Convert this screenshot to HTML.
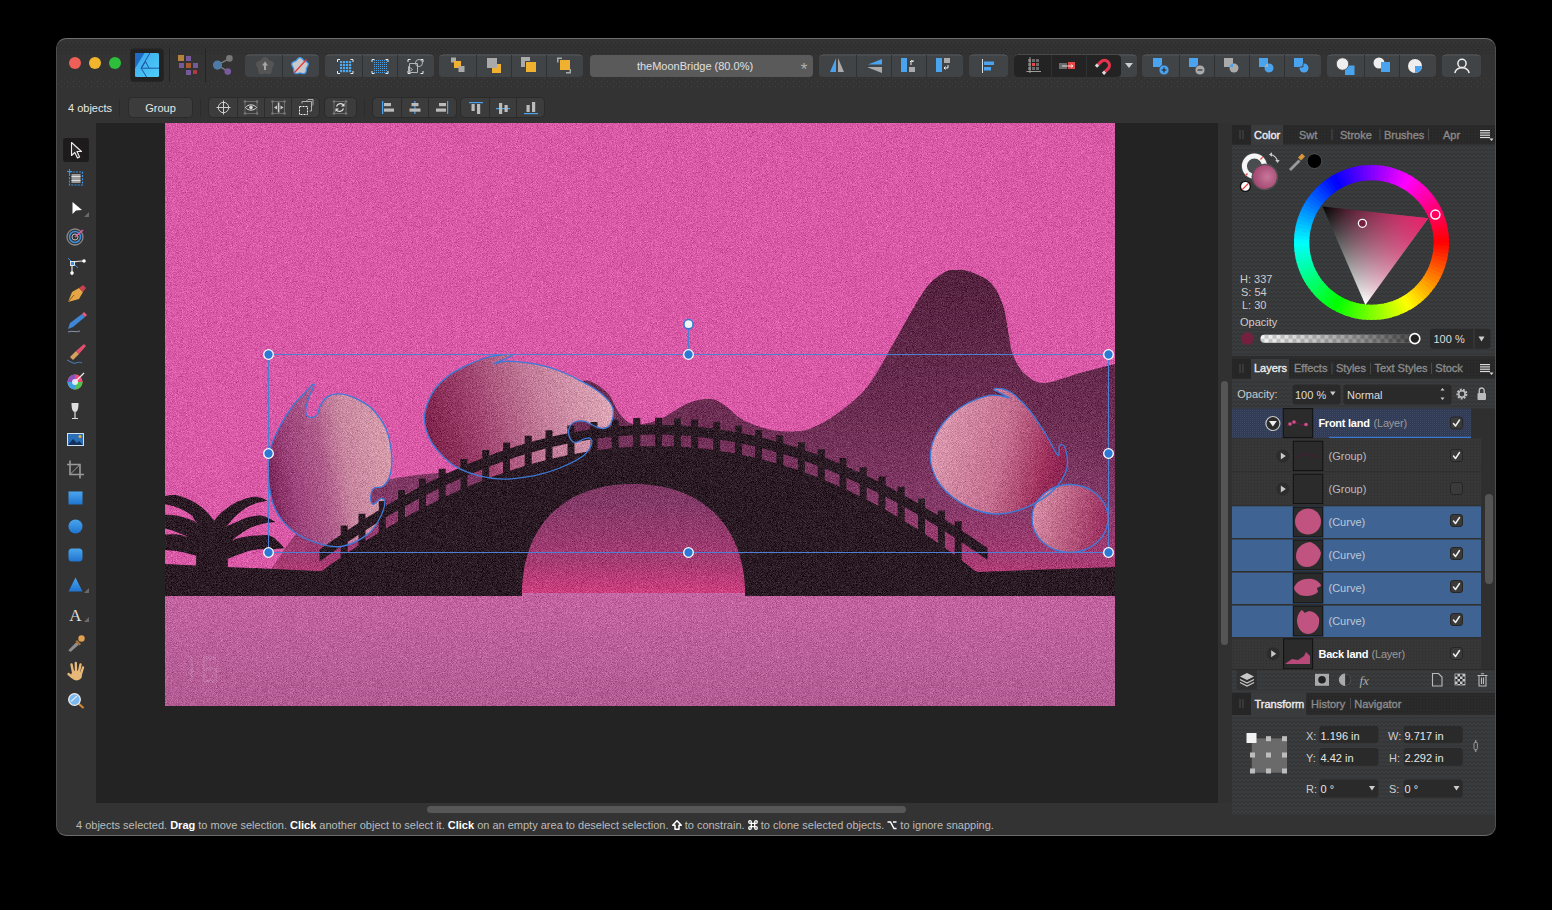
<!DOCTYPE html>
<html><head><meta charset="utf-8">
<style>
*{box-sizing:border-box}
body{margin:0;width:1552px;height:910px;background:#000;overflow:hidden;position:relative;font-family:"Liberation Sans",sans-serif;color:#ddd}
.a{position:absolute}
#win{position:absolute;left:56px;top:38px;width:1440px;height:798px;background:#333;border-radius:10px;overflow:hidden;border:1px solid #4e4e4e;border-top-color:#6e6e6e;border-bottom-color:#6a6a6a}
.tl{position:absolute;width:12px;height:12px;border-radius:50%;top:57px}
.grp{position:absolute;background:#3e4043;border-radius:5px;top:55px;height:22px}
.grp2{position:absolute;background:#3e3e3e;border-radius:4px;top:98px;height:20px;border-bottom:1px solid #2a2a2a}
.sep{position:absolute;width:1px;background:#262626}
.dv{position:absolute;top:0;bottom:0;width:1px;background:#2d2d2d}
.txt{position:absolute;white-space:nowrap;font-size:11px;line-height:13px}
#canvas{position:absolute;left:96px;top:123px;width:1122px;height:680px;background:#232323}
#art{position:absolute;left:165px;top:123px;width:950px;height:583px;overflow:hidden}
#rp{position:absolute;left:1232px;top:123px;width:263px;height:692px;background:#3a3a3a}
.tabbar{position:absolute;left:1232px;width:263px;height:20px;background:#2c2c2c}
.tab{position:absolute;top:0;height:100%;font-size:11px;line-height:20px;color:#8e8e8e;white-space:nowrap}
.tab.on{color:#eee;background:#3a3a3a}
.tsep{position:absolute;top:5px;width:1px;height:11px;background:#555}
.row{position:absolute;left:1232px;width:249px;height:32px;border-bottom:1px solid #2a2a2a}
.sel{background:#3d6393}
.chk{position:absolute;left:1450px;width:13px;height:13px;border-radius:3px;background:#3c3c3c;border:1px solid #2a2a2a}
.thumb{position:absolute;width:29px;height:29px;background:#2a2a2a;border:1px solid #151515}
.box{position:absolute;background:#2a2a2a;border-radius:3px;border-bottom:1px solid #444;font-size:11px;color:#ddd;line-height:18px;padding-left:4px}
</style></head><body>
<div id="win"></div>

<!-- traffic lights -->
<div class="tl" style="left:69px;background:#ed5f57"></div>
<div class="tl" style="left:89px;background:#f0b52d"></div>
<div class="tl" style="left:109px;background:#2dbf3c"></div>

<!-- toolbar row 1 -->
<svg class="a" style="left:0;top:0" width="1552" height="130" viewBox="0 0 1552 130">
<defs>
<linearGradient id="gAD" x1="0" y1="0" x2="1" y2="1"><stop offset="0" stop-color="#3aa6ec"/><stop offset="1" stop-color="#4fd0fb"/></linearGradient>
</defs>
<pattern id="pDotD" width="4" height="4" patternUnits="userSpaceOnUse"><rect x="1" y="1" width="1.2" height="1.2" fill="#262626"/><rect x="3" y="3" width="1.2" height="1.2" fill="#2a2a2a"/></pattern>
<pattern id="pDotL" width="6" height="5" patternUnits="userSpaceOnUse"><rect x="1" y="1" width="1" height="1" fill="#444"/><rect x="4" y="3" width="1" height="1" fill="#3e3e3e"/></pattern>
<rect x="57" y="43" width="1438" height="11" fill="url(#pDotD)"/>
<rect x="57" y="78" width="1438" height="9" fill="url(#pDotL)"/>
<linearGradient id="gEdge" x1="0" y1="0" x2="0" y2="1"><stop offset="0" stop-color="#5e6164"/><stop offset="0.12" stop-color="#404447" stop-opacity="0"/><stop offset="1" stop-color="#404447" stop-opacity="0"/></linearGradient>
<g fill="#404447" stroke="url(#gEdge)" stroke-width="1">
<rect x="245" y="55" width="74" height="22" rx="4"/>
<rect x="325" y="55" width="109" height="22" rx="4"/>
<rect x="439" y="55" width="144" height="22" rx="4"/>
<rect x="819" y="55" width="144" height="22" rx="4"/>
<rect x="969" y="55" width="39" height="22" rx="4"/>
<rect x="1014" y="55" width="123" height="22" rx="4"/>
<rect x="1142" y="55" width="179" height="22" rx="4"/>
<rect x="1327" y="55" width="109" height="22" rx="4"/>
<rect x="1442" y="55" width="39" height="22" rx="4"/>
</g>
<rect x="1014" y="55" width="107" height="22" rx="4" fill="#232323"/>
<rect x="590" y="55" width="223" height="22" rx="4" fill="#5a5a5a"/>
<g fill="#2f3032">
<rect x="282" y="55" width="1" height="22"/>
<rect x="362" y="55" width="1" height="22"/><rect x="397" y="55" width="1" height="22"/>
<rect x="476" y="55" width="1" height="22"/><rect x="511" y="55" width="1" height="22"/><rect x="546" y="55" width="1" height="22"/>
<rect x="856" y="55" width="1" height="22"/><rect x="891" y="55" width="1" height="22"/><rect x="926" y="55" width="1" height="22"/>
<rect x="1051" y="55" width="1" height="22"/><rect x="1086" y="55" width="1" height="22"/>
<rect x="1179" y="55" width="1" height="22"/><rect x="1214" y="55" width="1" height="22"/><rect x="1249" y="55" width="1" height="22"/><rect x="1284" y="55" width="1" height="22"/>
<rect x="1364" y="55" width="1" height="22"/><rect x="1399" y="55" width="1" height="22"/>
</g>
<!-- app icon -->
<rect x="130.3" y="48.5" width="33.4" height="33.3" rx="3.5" fill="#222"/>
<rect x="135" y="53" width="24" height="24" rx="1.5" fill="url(#gAD)"/>
<path d="M135,53H144.5L135,68.5Z" fill="#1f6cc4"/>
<path d="M149.8,53L141.2,68.2L146.5,77M141.2,68.2H159M141.2,68.2L145.5,61.5L149,68.2" fill="none" stroke="#1a4a9a" stroke-width="0.9"/>
<rect x="169" y="48" width="1" height="34" fill="#242424"/>
<rect x="205" y="48" width="1" height="34" fill="#242424"/>
<!-- persona grid -->
<rect x="178" y="55" width="6" height="6" fill="#b5823e"/>
<rect x="186" y="56" width="5" height="5" fill="#76599a"/>
<rect x="179" y="63" width="5" height="5" fill="#76599a"/>
<rect x="186" y="63" width="5" height="5" fill="#a85a2e"/>
<rect x="193" y="63" width="5" height="5" fill="#76599a"/>
<rect x="186" y="70" width="5" height="5" fill="#76599a"/>
<rect x="193" y="70" width="4" height="4" fill="#b03a40"/>
<!-- share -->
<path d="M217.5,65.1L229.4,58.4M217.5,65.1L227.8,71.6" stroke="#888" stroke-width="1.2"/>
<circle cx="217.5" cy="65.1" r="4.6" fill="#4f7aa6"/>
<circle cx="229.4" cy="58.4" r="3.3" fill="#777"/>
<circle cx="227.8" cy="71.6" r="3.3" fill="#7a5a9e"/>
<!-- flowers -->
<path d="M273.4,66.2L273.0,66.8L272.6,67.4L272.3,68.0L272.1,68.5L271.9,69.1L271.9,69.7L271.8,70.4L271.8,71.1L271.6,71.9L271.4,72.6L271.0,73.2L270.5,73.7L269.8,74.1L269.1,74.2L268.3,74.3L267.6,74.2L266.9,74.0L266.2,73.8L265.6,73.7L265.0,73.6L264.4,73.7L263.8,73.8L263.1,74.0L262.4,74.2L261.7,74.3L260.9,74.2L260.2,74.1L259.5,73.7L259.0,73.2L258.6,72.6L258.4,71.9L258.2,71.1L258.2,70.4L258.1,69.7L258.1,69.1L257.9,68.5L257.7,68.0L257.4,67.4L257.0,66.8L256.6,66.2L256.3,65.5L256.1,64.8L256.0,64.0L256.2,63.3L256.5,62.7L257.0,62.1L257.6,61.6L258.2,61.3L258.9,61.0L259.5,60.7L260.1,60.5L260.6,60.2L261.1,59.8L261.5,59.3L261.9,58.8L262.4,58.2L263.0,57.7L263.6,57.3L264.3,57.0L265.0,56.9L265.7,57.0L266.4,57.3L267.0,57.7L267.6,58.2L268.1,58.8L268.5,59.3L268.9,59.8L269.4,60.2L269.9,60.5L270.5,60.7L271.1,61.0L271.8,61.3L272.4,61.6L273.0,62.1L273.5,62.7L273.8,63.3L274.0,64.0L273.9,64.8L273.7,65.5Z" fill="#555"/>
<path d="M265,61.5L262,65.5H264V70H266V65.5H268Z" fill="#a6a6a6"/>
<path d="M307.7,66.2L307.4,66.8L307.0,67.3L306.8,67.8L306.5,68.3L306.4,68.9L306.4,69.4L306.3,70.1L306.3,70.7L306.1,71.4L305.9,72.1L305.5,72.7L305.1,73.2L304.5,73.5L303.8,73.6L303.1,73.7L302.4,73.6L301.7,73.4L301.1,73.2L300.5,73.1L300.0,73.1L299.5,73.1L298.9,73.2L298.3,73.4L297.6,73.6L296.9,73.7L296.2,73.6L295.5,73.5L294.9,73.2L294.5,72.7L294.1,72.1L293.9,71.4L293.7,70.7L293.7,70.1L293.6,69.4L293.6,68.9L293.5,68.3L293.2,67.8L293.0,67.3L292.6,66.8L292.3,66.2L292.0,65.6L291.8,64.9L291.7,64.2L291.8,63.5L292.1,62.9L292.6,62.4L293.1,62.0L293.7,61.7L294.4,61.4L295.0,61.2L295.5,60.9L296.0,60.6L296.4,60.3L296.8,59.8L297.2,59.4L297.6,58.8L298.1,58.4L298.7,58.0L299.3,57.7L300.0,57.6L300.7,57.7L301.3,58.0L301.9,58.4L302.4,58.8L302.8,59.4L303.2,59.8L303.6,60.3L304.0,60.6L304.5,60.9L305.0,61.2L305.6,61.4L306.3,61.7L306.9,62.0L307.4,62.4L307.9,62.9L308.2,63.5L308.3,64.2L308.2,64.9L308.0,65.6Z" fill="#c9c9c9" stroke="#3b8fe4" stroke-width="1.3"/>
<path d="M294.5,72.5L306.5,59.5" stroke="#e8323c" stroke-width="1.2"/>
<!-- grids -->
<g fill="#4aa9f2">
<rect x="340" y="61" width="2.2" height="2.2"/><rect x="343" y="61" width="2.2" height="2.2"/><rect x="346" y="61" width="2.2" height="2.2"/><rect x="349" y="61" width="2.2" height="2.2"/>
<rect x="340" y="64" width="2.2" height="2.2"/><rect x="343" y="64" width="2.2" height="2.2"/><rect x="346" y="64" width="2.2" height="2.2"/><rect x="349" y="64" width="2.2" height="2.2"/>
<rect x="340" y="67" width="2.2" height="2.2"/><rect x="343" y="67" width="2.2" height="2.2"/><rect x="346" y="67" width="2.2" height="2.2"/><rect x="349" y="67" width="2.2" height="2.2"/>
<rect x="340" y="70" width="2.2" height="2.2"/><rect x="343" y="70" width="2.2" height="2.2"/><rect x="346" y="70" width="2.2" height="2.2"/><rect x="349" y="70" width="2.2" height="2.2"/>
</g>
<g fill="#4a9ee6"><rect x="374" y="60" width="1" height="1"/><rect x="374" y="62" width="1" height="1"/><rect x="374" y="64" width="1" height="1"/><rect x="374" y="66" width="1" height="1"/><rect x="374" y="68" width="1" height="1"/><rect x="374" y="70" width="1" height="1"/><rect x="374" y="72" width="1" height="1"/><rect x="376" y="60" width="1" height="1"/><rect x="376" y="62" width="1" height="1"/><rect x="376" y="64" width="1" height="1"/><rect x="376" y="66" width="1" height="1"/><rect x="376" y="68" width="1" height="1"/><rect x="376" y="70" width="1" height="1"/><rect x="376" y="72" width="1" height="1"/><rect x="378" y="60" width="1" height="1"/><rect x="378" y="62" width="1" height="1"/><rect x="378" y="64" width="1" height="1"/><rect x="378" y="66" width="1" height="1"/><rect x="378" y="68" width="1" height="1"/><rect x="378" y="70" width="1" height="1"/><rect x="378" y="72" width="1" height="1"/><rect x="380" y="60" width="1" height="1"/><rect x="380" y="62" width="1" height="1"/><rect x="380" y="64" width="1" height="1"/><rect x="380" y="66" width="1" height="1"/><rect x="380" y="68" width="1" height="1"/><rect x="380" y="70" width="1" height="1"/><rect x="380" y="72" width="1" height="1"/><rect x="382" y="60" width="1" height="1"/><rect x="382" y="62" width="1" height="1"/><rect x="382" y="64" width="1" height="1"/><rect x="382" y="66" width="1" height="1"/><rect x="382" y="68" width="1" height="1"/><rect x="382" y="70" width="1" height="1"/><rect x="382" y="72" width="1" height="1"/><rect x="384" y="60" width="1" height="1"/><rect x="384" y="62" width="1" height="1"/><rect x="384" y="64" width="1" height="1"/><rect x="384" y="66" width="1" height="1"/><rect x="384" y="68" width="1" height="1"/><rect x="384" y="70" width="1" height="1"/><rect x="384" y="72" width="1" height="1"/><rect x="386" y="60" width="1" height="1"/><rect x="386" y="62" width="1" height="1"/><rect x="386" y="64" width="1" height="1"/><rect x="386" y="66" width="1" height="1"/><rect x="386" y="68" width="1" height="1"/><rect x="386" y="70" width="1" height="1"/><rect x="386" y="72" width="1" height="1"/></g>
<g fill="none" stroke="#eee" stroke-width="1">
<path d="M337.5,62V59.5H340M350.5,59.5H353V62M353,71V73.5H350.5M340,73.5H337.5V71"/>
<path d="M372,62V59.5H374.5M385.5,59.5H388V62M388,71V73.5H385.5M374.5,73.5H372V71"/>
<path d="M408,62V59.5H410.5M420.5,59.5H423V62M423,71V73.5H420.5M410.5,73.5H408V71"/>
</g>
<g fill="none" stroke="#b5b5b5" stroke-width="1">
<path d="M409.5,63.5h8v9h-8z"/><circle cx="419" cy="63" r="3.5"/><path d="M408.5,66.5v6l4,-3z"/>
</g>
<!-- arrange -->
<rect x="451" y="57.5" width="5" height="5" fill="#aaa"/><rect x="454" y="61" width="7" height="7" fill="#f0b030"/><rect x="458.5" y="66" width="6" height="6" fill="#aaa"/>
<rect x="487" y="58" width="10" height="10" fill="#aaa"/><path d="M497,64h4v9h-9v-5h5z" fill="#f0b030"/>
<path d="M521,57h9v4h-5v6h-4z" fill="#aaa"/><rect x="526" y="62" width="10" height="10" fill="#f0b030"/>
<path d="M557,57.5h5v1.5h-3.5v3.5H557z" fill="#aaa"/><rect x="560" y="60" width="10" height="10" fill="#f0b030"/><path d="M571,69v4.5h-5V72h3.5V69z" fill="#aaa"/>
<!-- title -->
<text x="695" y="70" font-size="11" fill="#e0e0e0" text-anchor="middle">theMoonBridge (80.0%)</text>
<text x="804" y="75" font-size="17" fill="#b0b0b0" text-anchor="middle">*</text>
<!-- flip/rotate -->
<path d="M836,58L830,72H836Z" fill="#4aa3ee"/><path d="M838,58L844,72H838Z" fill="#aaa"/>
<path d="M882,59L868,64.5H882Z" fill="#4aa3ee"/><path d="M882,67L868,67V67.5L882,73Z" fill="#aaa"/>
<rect x="901" y="58" width="6" height="14" fill="#4aa3ee"/><rect x="909" y="67" width="6" height="5" fill="#aaa"/><path d="M911,65v-4h3M910,62l1.5,-1.5l1.5,1.5" fill="none" stroke="#eee" stroke-width="1"/>
<rect x="936" y="58" width="6" height="14" fill="#4aa3ee"/><rect x="944" y="58" width="6" height="5" fill="#aaa"/><path d="M948,65v3h-4M945.5,66.5l-1.5,1.5l1.5,1.5" fill="none" stroke="#eee" stroke-width="1"/>
<!-- align -->
<rect x="982" y="59" width="1" height="14" fill="#ddd"/><rect x="984" y="61.5" width="10" height="3.5" fill="#4aa3ee"/><rect x="984" y="67" width="7" height="3.5" fill="#4aa3ee"/>
<!-- snapping -->
<g fill="#6b6b6b"><rect x="1028" y="59" width="3" height="3"/><rect x="1032" y="59" width="3" height="3"/><rect x="1036" y="59" width="3" height="3"/><rect x="1028" y="63" width="3" height="3"/><rect x="1036" y="63" width="3" height="3"/><rect x="1028" y="67" width="3" height="3"/><rect x="1032" y="67" width="3" height="3"/><rect x="1036" y="67" width="3" height="3"/></g>
<rect x="1032" y="63" width="3" height="3" fill="#e54848"/>
<path d="M1026.5,71.5H1041M1030,57V73" stroke="#bbb" stroke-width="0.8"/>
<rect x="1059" y="63" width="8" height="6" fill="#6b6b6b"/><rect x="1068" y="62" width="7" height="7" fill="#e54848"/><path d="M1062,66H1073M1071,64.5l2,1.5l-2,1.5" stroke="#eee" stroke-width="0.9" fill="none"/>
<g transform="translate(1103.7,66) rotate(45)"><path d="M-5,3V-1A5,5 0 0 1 5,-1V3" fill="none" stroke="#e5344e" stroke-width="3.2"/><path d="M-5,3v3M5,3v3" stroke="#ddd" stroke-width="3.2"/></g>

<path d="M1125,63h8l-4,5z" fill="#ccc"/>
<!-- boolean -->
<rect x="1153" y="58" width="9" height="9" fill="#4aa3ee"/><circle cx="1164" cy="70" r="5" fill="#4aa3ee" stroke="#404447" stroke-width="0.8"/><path d="M1161.6,70h4.8M1164,67.6v4.8" stroke="#222" stroke-width="1.1"/>
<rect x="1189" y="58" width="9" height="9" fill="#4aa3ee"/><circle cx="1200" cy="70" r="5" fill="#aaa" stroke="#404447" stroke-width="0.8"/><path d="M1197.6,70h4.8" stroke="#222" stroke-width="1.1"/>
<rect x="1224" y="58" width="9" height="9" fill="#aaa"/><circle cx="1234" cy="68" r="4.5" fill="#aaa"/><path d="M1229.5,68A4.5,4.5 0 0 1 1233,63.6V67h-3.5z" fill="#4aa3ee"/>
<rect x="1259" y="58" width="9" height="9" fill="#4aa3ee"/><circle cx="1269" cy="68" r="4.5" fill="#4aa3ee"/><path d="M1264.5,68A4.5,4.5 0 0 1 1268,63.6V67h-3.5z" fill="#aaa"/>
<rect x="1294" y="58" width="9" height="9" fill="#4aa3ee"/><circle cx="1304" cy="68" r="4.5" fill="#4aa3ee"/><path d="M1299.5,67H1303V63.5" stroke="#333" stroke-width="0.8" fill="none"/>
<!-- insert -->
<rect x="1345" y="65.5" width="9.5" height="9.5" fill="#4aa3ee"/><circle cx="1342.5" cy="64" r="6.2" fill="#eee" stroke="#404447" stroke-width="0.8"/>
<circle cx="1379" cy="63" r="5.5" fill="#eee"/><rect x="1381" y="62" width="9" height="10" fill="#4aa3ee"/>
<circle cx="1415" cy="66" r="7" fill="#eee"/><path d="M1415,66h7A7,7 0 0 1 1415,73z" fill="#4aa3ee"/>
<!-- person -->
<circle cx="1462" cy="63.4" r="4.1" fill="none" stroke="#eee" stroke-width="1.5"/><path d="M1454.8,73C1455.8,69.3 1458.5,67.8 1462,67.8C1465.5,67.8 1468.2,69.3 1469.2,73" fill="none" stroke="#eee" stroke-width="1.5"/>
</svg>

<!-- toolbar row 2 + tools -->
<svg class="a" style="left:0;top:0" width="100" height="910" viewBox="0 0 100 910">
<defs>
<linearGradient id="gBlue" x1="0" y1="0" x2="0" y2="1"><stop offset="0" stop-color="#4aa6ee"/><stop offset="1" stop-color="#1f74d0"/></linearGradient>
<radialGradient id="gWheel" cx="0.5" cy="0.5" r="0.5"><stop offset="0" stop-color="#fff"/><stop offset="1" stop-color="#fff" stop-opacity="0"/></radialGradient>
</defs>
<!-- selected move -->
<rect x="63" y="138" width="26" height="24" rx="3" fill="#1e1b1d"/>
<path d="M71.5,142.5V155.5L74.8,152.5L77.5,158L79.6,157L77,151.5H81.5Z" fill="#2a2a2a" stroke="#eee" stroke-width="1.1" stroke-linejoin="round"/>
<!-- artboard -->
<rect x="69.5" y="172" width="13" height="13" fill="none" stroke="#3d95e6" stroke-width="1.2" stroke-dasharray="2 1.2"/>
<rect x="71.5" y="174" width="9" height="9" fill="#9a9a9a"/><path d="M71.5,176.5h9M71.5,180.5h9" stroke="#ddd" stroke-width="1"/>
<path d="M69.5,169v5M67,171.5h5" stroke="#3d95e6" stroke-width="1"/>
<!-- node -->
<path d="M72.5,202V214L76,210.5L82,210Z" fill="#fff"/>
<path d="M89,212V217H84Z" fill="#6a6a6a"/>
<!-- contour -->
<circle cx="75" cy="237" r="8" fill="none" stroke="#8a8a8a" stroke-width="1.3"/><circle cx="75" cy="237" r="5.5" fill="none" stroke="#3d8ee0" stroke-width="1.5"/><circle cx="75" cy="237" r="3" fill="none" stroke="#bbb" stroke-width="1"/>
<path d="M75,237L83,230" stroke="#e85aa0" stroke-width="1.6"/>
<!-- corner -->
<path d="M72,275V265C72,262 75,261 84,261" fill="none" stroke="#ddd" stroke-width="1.2"/>
<path d="M68,258L78,268" stroke="#3d8ee0" stroke-width="1"/>
<rect x="70.5" y="261.5" width="4" height="4" fill="#3d8ee0" stroke="#fff" stroke-width="0.8"/>
<circle cx="84" cy="261" r="1.8" fill="#fff"/><circle cx="72" cy="273" r="1.8" fill="#fff"/>
<!-- pen -->
<path d="M68,302L72,292L79,288L83,292L79,299Z" fill="#e5a445"/><path d="M79,288L83,285L86,288L83,292Z" fill="#c8424e"/><path d="M68,302L74,295" stroke="#6a4a20" stroke-width="0.8"/>
<!-- pencil -->
<path d="M68,329L70,323L82,314L85,317L73,327Z" fill="#3f86d6"/><path d="M82,314L84,312L87,315L85,317Z" fill="#e85a7a"/><path d="M68,332C72,330 76,333 80,331" fill="none" stroke="#9ac" stroke-width="0.8"/>
<!-- brush -->
<path d="M70,357L76,351L79,354L73,360Z" fill="#d8a060"/><path d="M76,351L84,344L86,346L79,354Z" fill="#e0506e"/><path d="M67,360L73,363C76,364 78,361 82,363" fill="none" stroke="#4a8ad0" stroke-width="0.9"/>
<!-- fill wheel -->
<circle cx="75" cy="382" r="7.5" fill="#e0a030"/>
<path d="M75,382L75,374.5A7.5,7.5 0 0 1 82.5,382Z" fill="#f04a80"/><path d="M75,382L82.5,382A7.5,7.5 0 0 1 75,389.5Z" fill="#50c050"/><path d="M75,382L75,389.5A7.5,7.5 0 0 1 67.5,382Z" fill="#40a0e0"/><path d="M75,382L67.5,382A7.5,7.5 0 0 1 75,374.5Z" fill="#8a50c0"/>
<circle cx="75" cy="382" r="3" fill="#fff" opacity="0.8"/><path d="M75,382L84,373" stroke="#eee" stroke-width="1.3"/>
<!-- transparency glass -->
<path d="M71.5,403H78.5C78.5,409 77.5,412 75,412C72.5,412 71.5,409 71.5,403Z" fill="#ddd"/><path d="M75,412V418M72,418.5H78" stroke="#ddd" stroke-width="1.2"/>
<!-- place image -->
<rect x="67" y="433" width="17" height="13" fill="#cfe0f0"/><rect x="68" y="434" width="15" height="11" fill="#2a6fb8"/><path d="M68,445L73,439L77,443L79,441L83,445Z" fill="#15305a"/><circle cx="80" cy="436.5" r="1.5" fill="#f0b030"/>
<!-- crop -->
<path d="M70,460.5V474.5H84M67,464.5H80V478.5" fill="none" stroke="#9a9a9a" stroke-width="1.6"/><path d="M70,474.5L80,464.5" stroke="#9a9a9a" stroke-width="1"/>
<!-- shapes -->
<rect x="68.5" y="491.5" width="14" height="13" fill="url(#gBlue)"/>
<circle cx="75.5" cy="526.5" r="7" fill="url(#gBlue)"/>
<rect x="68.5" y="548.5" width="14" height="13" rx="3.5" fill="url(#gBlue)"/>
<path d="M75.5,577.5L82.5,591.5H68.5Z" fill="url(#gBlue)"/>
<path d="M89,588V593H84Z" fill="#6a6a6a"/>
<text x="75.5" y="621" font-family="Liberation Serif" font-size="17" fill="#ddd" text-anchor="middle">A</text>
<path d="M89,617V622H84Z" fill="#6a6a6a"/>
<!-- picker -->
<path d="M68.3,650.3L76.5,642L79,644.5L70.5,652Z" fill="#8e8e8e"/><path d="M75.5,641.5L79.5,645.5L81,644L77,640Z" fill="#b07030"/><circle cx="81.5" cy="638.5" r="3.2" fill="#e0a050"/>
<!-- hand -->
<g stroke="#e8b878" stroke-width="2.4" stroke-linecap="round" fill="none"><path d="M73,672L71.5,664.5M76,671L75.8,663M79,671.5L80.5,664.5M81,674L83,667.5M72,677L68.5,674"/></g>
<ellipse cx="76.5" cy="675.5" rx="5.5" ry="5" fill="#e8b878"/>
<!-- zoom -->
<path d="M78.5,703.5L83.5,708" stroke="#d08838" stroke-width="2.2"/><circle cx="74.5" cy="699.5" r="5.8" fill="#7ab8ee" stroke="#eee" stroke-width="1.3"/><path d="M71,701.5L77,696" stroke="#cfe6fa" stroke-width="1.5"/>
</svg>
<svg class="a" style="left:100px;top:90px" width="460" height="34" viewBox="100 90 460 34">
<g fill="#3c3c3c" stroke="#2a2a2a" stroke-width="1">
<rect x="128.5" y="97.5" width="64" height="20" rx="4"/>
<rect x="208.5" y="97.5" width="111" height="20" rx="4"/>
<rect x="324.5" y="97.5" width="32" height="20" rx="4"/>
<rect x="372.5" y="97.5" width="84" height="20" rx="4"/>
<rect x="460.5" y="97.5" width="84" height="20" rx="4"/>
</g>
<g fill="#2c2c2c">
<rect x="119" y="99" width="1" height="18"/><rect x="200" y="99" width="1" height="18"/><rect x="364" y="99" width="1" height="18"/>
<rect x="237" y="98" width="1" height="19"/><rect x="264" y="98" width="1" height="19"/><rect x="291" y="98" width="1" height="19"/>
<rect x="401" y="98" width="1" height="19"/><rect x="428" y="98" width="1" height="19"/>
<rect x="489" y="98" width="1" height="19"/><rect x="516" y="98" width="1" height="19"/>
</g>
<text x="160.5" y="112" font-size="11" fill="#e6e6e6" text-anchor="middle">Group</text>
<g fill="none" stroke="#cfcfcf" stroke-width="1">
<circle cx="223.5" cy="107.5" r="5.2"/><path d="M223.5,100.5v14M216.5,107.5h14"/>
</g>
<g fill="none" stroke="#777" stroke-width="0.8"><rect x="245" y="101.5" width="12" height="12"/><rect x="272.5" y="101.5" width="12" height="12"/><rect x="334" y="101.5" width="12" height="12"/></g>
<g fill="#777"><circle cx="245" cy="101.5" r="1.3"/><circle cx="257" cy="101.5" r="1.3"/><circle cx="245" cy="113.5" r="1.3"/><circle cx="257" cy="113.5" r="1.3"/>
<circle cx="272.5" cy="101.5" r="1.3"/><circle cx="284.5" cy="101.5" r="1.3"/><circle cx="272.5" cy="113.5" r="1.3"/><circle cx="284.5" cy="113.5" r="1.3"/>
<circle cx="334" cy="101.5" r="1.3"/><circle cx="346" cy="101.5" r="1.3"/><circle cx="334" cy="113.5" r="1.3"/><circle cx="346" cy="113.5" r="1.3"/></g>
<path d="M245.5,107.5C248,104 254,104 256.5,107.5C254,111 248,111 245.5,107.5Z" fill="none" stroke="#ddd" stroke-width="1"/><circle cx="251" cy="107.5" r="1.8" fill="#ddd"/>
<rect x="277.8" y="102.5" width="1.6" height="10" fill="#ccc"/><path d="M274,107.5l3,-2v4zM283.5,107.5l-3,-2v4z" fill="#ccc"/>
<path d="M299.5,106.5h8v8h-8z" fill="none" stroke="#eee" stroke-width="1" stroke-dasharray="2 1"/><path d="M302,103.5V101.5h9.5v9.5h-2M306,101.5l2,-2h5v5l-2,2" fill="none" stroke="#bbb" stroke-width="0.9"/>
<path d="M336.5,106.5A4.2,4.2 0 0 1 344,105.5M343.5,108.5A4.2,4.2 0 0 1 336,109.5" fill="none" stroke="#ddd" stroke-width="1.2"/><path d="M344.5,103v3.5h-3.5zM335.5,112v-3.5h3.5z" fill="#ddd"/>
<!-- align icons -->
<rect x="382" y="101" width="1.2" height="13" fill="#4aa3ee"/><rect x="384" y="103" width="7" height="3.2" fill="#bbb"/><rect x="384" y="108.5" width="10" height="3.2" fill="#bbb"/>
<rect x="414.3" y="101" width="1.2" height="13" fill="#4aa3ee"/><rect x="411.5" y="103" width="7" height="3.2" fill="#bbb"/><rect x="409.5" y="108.5" width="11" height="3.2" fill="#bbb"/>
<rect x="447" y="101" width="1.2" height="13" fill="#4aa3ee"/><rect x="439" y="103" width="7" height="3.2" fill="#bbb"/><rect x="436" y="108.5" width="10" height="3.2" fill="#bbb"/>
<rect x="469" y="102" width="14" height="1.2" fill="#4aa3ee"/><rect x="471.5" y="104" width="3.2" height="7" fill="#bbb"/><rect x="477" y="104" width="3.2" height="10" fill="#bbb"/>
<rect x="496" y="108" width="14" height="1.2" fill="#4aa3ee"/><rect x="499" y="103" width="3.2" height="11" fill="#bbb"/><rect x="504.5" y="105" width="3.2" height="7" fill="#bbb"/>
<rect x="524" y="113" width="14" height="1.2" fill="#4aa3ee"/><rect x="526.5" y="105" width="3.2" height="7" fill="#bbb"/><rect x="532" y="102" width="3.2" height="10" fill="#bbb"/>
</svg>
<div class="txt" style="left:68px;top:102px;color:#e6e6e6">4 objects</div>

<!-- canvas -->
<div id="canvas"></div>
<div class="a" style="left:1218px;top:123px;width:14px;height:680px;background:#313131"></div>
<div class="a" style="left:1221px;top:381px;width:7px;height:264px;border-radius:4px;background:#555"></div>
<div class="a" style="left:427px;top:806px;width:479px;height:7px;border-radius:4px;background:#575757"></div>

<svg class="a" style="left:165px;top:123px" width="950" height="583" viewBox="165 123 950 583">
<defs>
<linearGradient id="gBack" x1="0" y1="270" x2="0" y2="596" gradientUnits="userSpaceOnUse">
<stop offset="0" stop-color="#52213d"/><stop offset="0.45" stop-color="#6c2e53"/><stop offset="0.72" stop-color="#843a68"/><stop offset="0.9" stop-color="#a83b73"/><stop offset="1" stop-color="#d03f80"/></linearGradient>
<linearGradient id="gL1" x1="268" y1="470" x2="390" y2="450" gradientUnits="userSpaceOnUse"><stop offset="0" stop-color="#7e285c"/><stop offset="0.18" stop-color="#9c427a"/><stop offset="0.45" stop-color="#b05e8c"/><stop offset="0.62" stop-color="#c7849e"/><stop offset="1" stop-color="#d69cab"/></linearGradient>
<linearGradient id="gL2" x1="428" y1="440" x2="605" y2="395" gradientUnits="userSpaceOnUse"><stop offset="0" stop-color="#7e224a"/><stop offset="0.3" stop-color="#a04470"/><stop offset="0.62" stop-color="#c27a98"/><stop offset="1" stop-color="#dca4b4"/></linearGradient>
<linearGradient id="gL3" x1="940" y1="440" x2="1065" y2="470" gradientUnits="userSpaceOnUse"><stop offset="0" stop-color="#d894aa"/><stop offset="0.5" stop-color="#c46e8f"/><stop offset="0.85" stop-color="#9c2e5a"/><stop offset="1" stop-color="#8a2250"/></linearGradient>
<linearGradient id="gL4" x1="1035" y1="510" x2="1105" y2="525" gradientUnits="userSpaceOnUse"><stop offset="0" stop-color="#d68ca3"/><stop offset="1" stop-color="#9a2e5e"/></linearGradient>
<linearGradient id="gWater" x1="0" y1="596" x2="0" y2="706" gradientUnits="userSpaceOnUse"><stop offset="0" stop-color="#c263a0"/><stop offset="1" stop-color="#b25b93"/></linearGradient>
<filter id="grain" x="165" y="123" width="950" height="583" filterUnits="userSpaceOnUse" color-interpolation-filters="sRGB">
<feTurbulence type="fractalNoise" baseFrequency="1.2" numOctaves="2" seed="7" result="t"/>
<feColorMatrix in="t" type="matrix" values="0.6 0.3 0.1 0 0  0.6 0.3 0.1 0 0  0.6 0.3 0.1 0 0  0 0 0 0 1" result="g"/>
<feComposite in="SourceGraphic" in2="g" operator="arithmetic" k1="0" k2="1" k3="0.6" k4="-0.3"/>
</filter>
</defs>
<g filter="url(#grain)">
<rect x="165" y="123" width="950" height="583" fill="#da59a7"/>
<path fill="url(#gBack)" d="M272,568C276.7,561.7 288.7,541.3 300,530C311.3,518.7 326.2,508.2 340,500C353.8,491.8 366.8,485.5 383,481C399.2,476.5 420.8,474.7 437,473C453.2,471.3 464.5,476.5 480,471C495.5,465.5 516.7,451.8 530,440C543.3,428.2 551.1,409.9 560,400C568.9,390.1 575.8,381.9 583.6,380.7C591.4,379.4 601,386.9 607,392.5C613,398.1 615.5,408.8 619.7,414C623.9,419.2 627.6,422.5 632.3,424C637,425.5 642.9,424.1 648,423C653.1,421.9 656.3,421 663,417.7C669.7,414.4 680.4,406.4 688.2,403.3C696,400.2 703.9,398.5 709.9,398.8C715.9,399.1 718.9,401.7 724.3,405.1C729.7,408.6 734.9,415.4 742.4,419.5C749.9,423.6 760.4,427.5 769.4,429.5C778.4,431.5 789,431.8 796.5,431.3C804,430.9 807.2,430.1 814.5,426.8C821.8,423.5 831,418.6 840,411.6C849,404.6 859.1,397.4 868.6,385C878.1,372.6 887.5,353.1 897,337C906.5,320.9 917.7,299.4 925.7,288.6C933.7,277.8 940.1,275.1 945,272C949.9,268.9 951.2,270.2 955,270C958.8,269.8 962.2,269 968,271C973.8,273 984.2,276.5 990,282C995.8,287.5 999.6,296 1002.6,304C1005.6,312 1006.3,321.5 1008,330C1009.7,338.5 1010.2,347.7 1013,355C1015.8,362.3 1019.8,369.3 1025,374C1030.2,378.7 1034.8,383.2 1044,383C1053.2,382.8 1068.2,376.2 1080,373C1091.8,369.8 1107.5,365.8 1115,364C1122.5,362.2 1123.3,362.3 1125,362L1125,600L272,600Z"/>
<path fill="url(#gL1)" d="M314.3,384C315,385 309.6,394.7 308.2,399.3C306.7,404 305.5,408.7 305.7,411.7C305.9,414.7 307.5,416.5 309.4,417.2C311.3,417.8 315.1,417.2 316.8,415.4C318.6,413.7 318.1,409.8 319.8,406.8C321.4,403.8 323.5,399.5 326.7,397.4C329.9,395.2 334.3,393.8 339.1,393.9C343.8,394 349.6,395.6 355.1,398.1C360.7,400.7 367.3,404.1 372.5,409.2C377.6,414.4 382.9,421.6 386.1,429C389.2,436.4 390.8,446.3 391.5,453.7C392.2,461.2 391.8,468.2 390.5,473.5C389.2,478.9 386.4,483.4 383.6,485.9C380.8,488.4 375.8,486.3 373.7,488.4C371.6,490.4 370.8,495.6 370.7,498.3C370.6,500.9 371.5,504.4 373.2,504.4C374.9,504.4 379.2,498.5 381.1,498.3C383,498.1 385.2,499.5 384.8,503.2C384.4,506.9 381.7,515.2 378.6,520.5C375.5,525.9 372.5,531 366.3,535.4C360.1,539.7 349.8,545.2 341.5,546.5C333.3,547.7 325.1,545.4 316.8,542.8C308.6,540.1 299.1,536.2 292.1,530.4C285.1,524.6 278.7,516.8 274.8,508.2C270.9,499.5 269.4,488 268.6,478.5C267.8,469 268.2,459.5 269.8,451.3C271.5,443 274.8,436.4 278.5,429C282.2,421.6 287.8,412.7 292.1,406.8C296.4,400.8 300.7,397 304.5,393.2C308.2,389.4 313.7,383 314.3,384Z"/>
<path fill="url(#gL2)" d="M424.6,415.1C425.4,408.2 428.8,399.2 432.5,392.8C436.2,386.4 441.8,381.1 446.9,376.9C451.9,372.6 457,370.3 462.8,367.3C468.6,364.3 475.8,361.1 481.9,359C488,357 494.4,355.6 499.4,355C504.5,354.4 513,354 512.2,355.4C511.4,356.7 496,362.3 494.7,363.3C493.3,364.3 500.5,361.7 504.2,361.4C507.9,361.1 511.1,361.1 517,361.7C522.8,362.3 532.4,363.5 539.3,364.9C546.2,366.4 551.8,368 558.4,370.5C565,373 572.5,376.6 579.1,380.1C585.8,383.5 592.9,387.2 598.2,391.2C603.5,395.2 608.5,400.2 611,404C613.5,407.7 613.5,410.1 613.4,413.5C613.2,417 611.9,422.1 610.2,424.7C608.5,427.2 605.8,428.5 603,428.7C600.2,428.8 596.6,426.7 593.5,425.5C590.3,424.2 587.1,421.7 583.9,421.2C580.7,420.6 576.9,420.9 574.3,422.3C571.8,423.7 569.4,426.7 568.8,429.4C568.1,432.2 569.2,436.8 570.4,439C571.5,441.2 573.7,442.5 575.9,442.5C578.2,442.5 581.5,439.7 583.9,439C586.3,438.3 589.1,437.1 590.3,438.2C591.5,439.3 592.4,442.3 591.1,445.4C589.7,448.4 587.7,452.7 582.3,456.5C576.9,460.4 566.4,465.3 558.4,468.5C550.4,471.7 543.5,473.9 534.5,475.7C525.5,477.4 513.5,479.2 504.2,479.2C494.9,479.2 487,477.8 478.7,475.7C470.5,473.5 461.7,470.3 454.8,466.1C447.9,461.8 441.8,455.5 437.3,450.2C432.8,444.9 429.9,440.1 427.7,434.2C425.6,428.4 423.8,422 424.6,415.1Z"/>
<path fill="url(#gL3)" d="M993.7,389.5C993.8,389.1 995.3,388.3 997.2,388.4C999.2,388.4 1002.4,388.7 1005.2,389.7C1008,390.7 1009.8,391 1013.9,394.5C1018.1,398 1024.8,404.3 1030,410.8C1035.2,417.3 1040.6,426 1045.3,433.5C1049.9,440.9 1055.4,453.3 1057.8,455.4C1060.2,457.5 1058.4,447.5 1059.5,446C1060.5,444.4 1062.8,443.9 1064.1,446C1065.3,448.1 1066.8,454.3 1067.2,458.5C1067.5,462.7 1068.1,466.2 1066.1,471C1064.2,475.9 1060.6,482.5 1055.7,487.7C1050.8,493 1043.9,498.3 1036.9,502.3C1030,506.4 1021.3,509.8 1013.9,511.7C1006.6,513.7 1000,514.4 993.1,513.8C986.1,513.3 979.2,511.6 972.2,508.6C965.2,505.7 957.2,501 951.3,496.1C945.4,491.2 940.2,485.6 936.7,479.4C933.2,473.1 930.8,465.5 930.4,458.5C930.1,451.5 931.8,444.2 934.6,437.6C937.4,431 941.9,424.4 947.1,418.8C952.4,413.3 958.8,408.1 965.9,404.2C973,400.3 983.4,396.7 989.7,395.4C996,394.1 1000.4,396.1 1003.7,396.5C1007,396.9 1009.6,398.3 1009.6,398C1009.5,397.6 1005.6,395.7 1003.4,394.5C1001.2,393.3 998,391.8 996.4,391C994.8,390.2 993.6,389.9 993.7,389.5Z"/>
<ellipse cx="1070" cy="518.5" rx="38" ry="34" fill="url(#gL4)"/>
<g fill="#2a1a23">
<path d="M165,564L196,565.6L228,567L275,569L318.5,571L978,572L1115,567L1115,596L165,596Z"/>
<path d="M318.5,597L318.5,571.4L319.2,572.8L322.2,570.7L325.2,568.5L328.2,566.3L331.2,564.2L334.2,562.1L337.2,560L340.2,557.9L343.2,555.9L346.2,553.8L349.1,551.8L352.1,549.8L355.1,547.8L358.1,545.8L361.1,543.9L364.1,542L367.1,540L370.1,538.1L373.1,536.3L376.1,534.4L379.1,532.6L382.1,530.8L385.1,528.9L388.1,527.2L391.1,525.4L394.1,523.7L397.1,521.9L400.1,520.2L403,518.5L406,516.9L409,515.2L412,513.6L415,511.9L418,510.4L421,508.8L424,507.2L427,505.7L430,504.2L433,502.7L436,501.2L439,499.7L442,498.3L445,496.8L448,495.4L451,494L454,492.7L456.9,491.3L459.9,490L462.9,488.7L465.9,487.4L468.9,486.1L471.9,484.9L474.9,483.6L477.9,482.4L480.9,481.2L483.9,480L486.9,478.9L489.9,477.8L492.9,476.6L495.9,475.5L498.9,474.5L501.9,473.4L504.9,472.4L507.9,471.3L510.8,470.3L513.8,469.4L516.8,468.4L519.8,467.5L522.8,466.6L525.8,465.7L528.8,464.8L531.8,463.9L534.8,463.1L537.8,462.2L540.8,461.4L543.8,460.7L546.8,459.9L549.8,459.2L552.8,458.4L555.8,457.7L558.8,457.1L561.8,456.4L564.8,455.8L567.7,455.1L570.7,454.5L573.7,454L576.7,453.4L579.7,452.9L582.7,452.4L585.7,451.9L588.7,451.4L591.7,450.9L594.7,450.5L597.7,450.1L600.7,449.7L603.7,449.3L606.7,448.9L609.7,448.6L612.7,448.3L615.7,448L618.7,447.7L621.6,447.5L624.6,447.3L627.6,447L630.6,446.9L633.6,446.7L636.6,446.5L639.6,446.4L642.6,446.3L645.6,446.2L648.6,446.2L651.6,446.1L654.6,446.1L657.6,446.1L660.6,446.1L663.6,446.2L666.6,446.2L669.6,446.3L672.6,446.4L675.5,446.5L678.5,446.7L681.5,446.8L684.5,447L687.5,447.2L690.5,447.5L693.5,447.7L696.5,448L699.5,448.3L702.5,448.6L705.5,449L708.5,449.3L711.5,449.7L714.5,450.1L717.5,450.5L720.5,451L723.5,451.4L726.5,451.9L729.4,452.5L732.4,453L735.4,453.5L738.4,454.1L741.4,454.7L744.4,455.3L747.4,456L750.4,456.6L753.4,457.3L756.4,458L759.4,458.8L762.4,459.5L765.4,460.3L768.4,461.1L771.4,461.9L774.4,462.8L777.4,463.6L780.4,464.5L783.4,465.4L786.3,466.3L789.3,467.3L792.3,468.3L795.3,469.3L798.3,470.3L801.3,471.3L804.3,472.4L807.3,473.5L810.3,474.6L813.3,475.7L816.3,476.8L819.3,478L822.3,479.2L825.3,480.4L828.3,481.7L831.3,482.9L834.3,484.2L837.3,485.5L840.2,486.9L843.2,488.2L846.2,489.6L849.2,491L852.2,492.4L855.2,493.9L858.2,495.4L861.2,496.8L864.2,498.4L867.2,499.9L870.2,501.5L873.2,503L876.2,504.7L879.2,506.3L882.2,507.9L885.2,509.6L888.2,511.3L891.2,513L894.1,514.8L897.1,516.6L900.1,518.3L903.1,520.2L906.1,522L909.1,523.9L912.1,525.7L915.1,527.7L918.1,529.6L921.1,531.5L924.1,533.5L927.1,535.5L930.1,537.6L933.1,539.6L936.1,541.7L939.1,543.8L942.1,545.9L945.1,548L948,550.2L951,552.4L954,554.6L957,556.8L960,559.1L963,561.4L966,563.7L969,566L972,568.4L975,570.8L978,572L978,597Z"/>
<path d="M319.5,549.7L322.1,547.8L324.7,546L327.2,544.2L329.8,542.3L332.4,540.5L335,538.8L337.6,537L340.1,535.2L342.7,533.5L345.3,531.7L347.9,530L350.4,528.3L353,526.6L355.6,524.9L358.2,523.2L360.8,521.5L363.3,519.9L365.9,518.3L368.5,516.6L371.1,515L373.7,513.4L376.2,511.8L378.8,510.3L381.4,508.7L384,507.1L386.6,505.6L389.1,504.1L391.7,502.6L394.3,501.1L396.9,499.6L399.5,498.1L402,496.7L404.6,495.2L407.2,493.8L409.8,492.4L412.3,491L414.9,489.6L417.5,488.2L420.1,486.8L422.7,485.5L425.2,484.2L427.8,482.8L430.4,481.5L433,480.2L435.6,479L438.1,477.7L440.7,476.4L443.3,475.2L445.9,474L448.5,472.8L451,471.6L453.6,470.4L456.2,469.2L458.8,468.1L461.4,467L463.9,465.8L466.5,464.7L469.1,463.6L471.7,462.6L474.2,461.5L476.8,460.5L479.4,459.4L482,458.4L484.6,457.4L487.1,456.4L489.7,455.5L492.3,454.5L494.9,453.6L497.5,452.6L500,451.7L502.6,450.8L505.2,450L507.8,449.1L510.4,448.2L512.9,447.4L515.5,446.6L518.1,445.8L520.7,445L523.3,444.2L525.8,443.5L528.4,442.7L531,442L533.6,441.3L536.1,440.6L538.7,439.9L541.3,439.2L543.9,438.6L546.5,437.9L549,437.3L551.6,436.7L554.2,436.1L556.8,435.5L559.4,435L561.9,434.4L564.5,433.9L567.1,433.4L569.7,432.9L572.3,432.4L574.8,431.9L577.4,431.5L580,431L582.6,430.6L585.2,430.2L587.7,429.8L590.3,429.4L592.9,429.1L595.5,428.7L598,428.4L600.6,428.1L603.2,427.7L605.8,427.5L608.4,427.2L610.9,426.9L613.5,426.7L616.1,426.4L618.7,426.2L621.3,426L623.8,425.8L626.4,425.7L629,425.5L631.6,425.4L634.2,425.2L636.7,425.1L639.3,425L641.9,424.9L644.5,424.9L647.1,424.8L649.6,424.8L652.2,424.8L654.8,424.7L657.4,424.8L659.9,424.8L662.5,424.8L665.1,424.9L667.7,424.9L670.3,425L672.8,425.1L675.4,425.2L678,425.3L680.6,425.5L683.2,425.6L685.7,425.8L688.3,426L690.9,426.2L693.5,426.4L696.1,426.6L698.6,426.9L701.2,427.1L703.8,427.4L706.4,427.7L709,428L711.5,428.3L714.1,428.7L716.7,429L719.3,429.4L721.8,429.8L724.4,430.2L727,430.6L729.6,431L732.2,431.5L734.7,431.9L737.3,432.4L739.9,432.9L742.5,433.4L745.1,433.9L747.6,434.4L750.2,435L752.8,435.6L755.4,436.1L758,436.7L760.5,437.4L763.1,438L765.7,438.6L768.3,439.3L770.9,440L773.4,440.7L776,441.4L778.6,442.1L781.2,442.8L783.7,443.6L786.3,444.3L788.9,445.1L791.5,445.9L794.1,446.7L796.6,447.6L799.2,448.4L801.8,449.3L804.4,450.2L807,451.1L809.5,452L812.1,452.9L814.7,453.8L817.3,454.8L819.9,455.8L822.4,456.7L825,457.7L827.6,458.8L830.2,459.8L832.8,460.8L835.3,461.9L837.9,463L840.5,464.1L843.1,465.2L845.6,466.3L848.2,467.4L850.8,468.6L853.4,469.7L856,470.9L858.5,472.1L861.1,473.3L863.7,474.5L866.3,475.8L868.9,477L871.4,478.3L874,479.5L876.6,480.8L879.2,482.1L881.8,483.5L884.3,484.8L886.9,486.1L889.5,487.5L892.1,488.8L894.7,490.2L897.2,491.6L899.8,493L902.4,494.5L905,495.9L907.5,497.3L910.1,498.8L912.7,500.3L915.3,501.8L917.9,503.3L920.4,504.8L923,506.3L925.6,507.8L928.2,509.4L930.8,510.9L933.3,512.5L935.9,514.1L938.5,515.7L941.1,517.3L943.7,518.9L946.2,520.5L948.8,522.2L951.4,523.8L954,525.5L956.6,527.2L959.1,528.9L961.7,530.6L964.3,532.3L966.9,534L969.4,535.7L972,537.5L974.6,539.2L977.2,541L979.8,542.8L982.3,544.6L984.9,546.4L987.5,548.2L987.5,560.1L984.9,558.3L982.3,556.4L979.8,554.6L977.2,552.9L974.6,551.1L972,549.3L969.4,547.6L966.9,545.8L964.3,544.1L961.7,542.3L959.1,540.6L956.6,538.9L954,537.2L951.4,535.6L948.8,533.9L946.2,532.2L943.7,530.6L941.1,529L938.5,527.3L935.9,525.7L933.3,524.1L930.8,522.5L928.2,521L925.6,519.4L923,517.9L920.4,516.3L917.9,514.8L915.3,513.3L912.7,511.8L910.1,510.3L907.5,508.8L905,507.4L902.4,505.9L899.8,504.5L897.2,503.1L894.7,501.6L892.1,500.2L889.5,498.9L886.9,497.5L884.3,496.1L881.8,494.8L879.2,493.5L876.6,492.1L874,490.8L871.4,489.5L868.9,488.3L866.3,487L863.7,485.8L861.1,484.5L858.5,483.3L856,482.1L853.4,480.9L850.8,479.7L848.2,478.6L845.6,477.4L843.1,476.3L840.5,475.1L837.9,474L835.3,472.9L832.8,471.9L830.2,470.8L827.6,469.7L825,468.7L822.4,467.7L819.9,466.7L817.3,465.7L814.7,464.7L812.1,463.8L809.5,462.8L807,461.9L804.4,461L801.8,460.1L799.2,459.2L796.6,458.3L794.1,457.5L791.5,456.7L788.9,455.8L786.3,455L783.7,454.3L781.2,453.5L778.6,452.7L776,452L773.4,451.3L770.9,450.6L768.3,449.9L765.7,449.2L763.1,448.5L760.5,447.9L758,447.2L755.4,446.6L752.8,446L750.2,445.4L747.6,444.9L745.1,444.3L742.5,443.8L739.9,443.3L737.3,442.8L734.7,442.3L732.2,441.8L729.6,441.3L727,440.9L724.4,440.4L721.8,440L719.3,439.6L716.7,439.2L714.1,438.9L711.5,438.5L709,438.2L706.4,437.9L703.8,437.6L701.2,437.3L698.6,437L696.1,436.7L693.5,436.5L690.9,436.2L688.3,436L685.7,435.8L683.2,435.6L680.6,435.5L678,435.3L675.4,435.2L672.8,435L670.3,434.9L667.7,434.8L665.1,434.7L662.5,434.7L659.9,434.6L657.4,434.6L654.8,434.6L652.2,434.6L649.6,434.6L647.1,434.7L644.5,434.7L641.9,434.8L639.3,434.9L636.7,435L634.2,435.2L631.6,435.3L629,435.5L626.4,435.7L623.8,435.8L621.3,436L618.7,436.3L616.1,436.5L613.5,436.7L610.9,437L608.4,437.3L605.8,437.6L603.2,437.9L600.6,438.2L598,438.6L595.5,438.9L592.9,439.3L590.3,439.7L587.7,440.1L585.2,440.5L582.6,440.9L580,441.3L577.4,441.8L574.8,442.3L572.3,442.8L569.7,443.3L567.1,443.8L564.5,444.3L561.9,444.9L559.4,445.4L556.8,446L554.2,446.6L551.6,447.2L549,447.8L546.5,448.5L543.9,449.1L541.3,449.8L538.7,450.5L536.1,451.2L533.6,451.9L531,452.6L528.4,453.4L525.8,454.1L523.3,454.9L520.7,455.7L518.1,456.5L515.5,457.3L512.9,458.2L510.4,459L507.8,459.9L505.2,460.8L502.6,461.7L500,462.6L497.5,463.5L494.9,464.4L492.3,465.4L489.7,466.4L487.1,467.4L484.6,468.4L482,469.4L479.4,470.4L476.8,471.5L474.2,472.5L471.7,473.6L469.1,474.7L466.5,475.8L463.9,476.9L461.4,478.1L458.8,479.2L456.2,480.4L453.6,481.6L451,482.8L448.5,484L445.9,485.2L443.3,486.4L440.7,487.7L438.1,489L435.6,490.2L433,491.5L430.4,492.8L427.8,494.2L425.2,495.5L422.7,496.9L420.1,498.2L417.5,499.6L414.9,501L412.3,502.4L409.8,503.8L407.2,505.2L404.6,506.7L402,508.1L399.5,509.6L396.9,511.1L394.3,512.6L391.7,514.1L389.1,515.6L386.6,517.2L384,518.7L381.4,520.3L378.8,521.9L376.2,523.5L373.7,525.1L371.1,526.7L368.5,528.3L365.9,530L363.3,531.6L360.8,533.3L358.2,535L355.6,536.7L353,538.4L350.4,540.1L347.9,541.8L345.3,543.5L342.7,545.3L340.1,547.1L337.6,548.8L335,550.6L332.4,552.4L329.8,554.3L327.2,556.1L324.7,557.9L322.1,559.8L319.5,561.6Z"/>
<path d="M340.7,525.5h7v37.7h-7ZM358.5,513.8h7v37.6h-7ZM378.8,501.1h7v37.5h-7ZM398,490h7v37.4h-7ZM418.9,478.6h7v37.4h-7ZM438.7,468.7h7v37.4h-7ZM460.4,458.9h7v37.4h-7ZM482.2,450h7v37.4h-7ZM503,442.5h7v37.3h-7ZM524.7,435.8h7v37.2h-7ZM545.5,430.3h7v37h-7ZM567.5,425.6h7v36.9h-7ZM590.5,421.9h7v36.7h-7ZM611.7,419.5h7v36.5h-7ZM633.3,418.1h7v36.4h-7ZM655,417.8h7v36.3h-7ZM673.9,418.3h7v36.3h-7ZM691.1,419.5h7v36.3h-7ZM713.2,422h7v36.4h-7ZM734.9,425.6h7v36.5h-7ZM755.1,429.9h7v36.7h-7ZM776.3,435.4h7v36.9h-7ZM798,442.2h7v37.2h-7ZM817.8,449.3h7v37.5h-7ZM839.5,458.1h7v38h-7ZM859.7,467.3h7v38.6h-7ZM878.5,476.6h7v39.3h-7ZM897.7,486.8h7v40.2h-7ZM918,498.4h7v41.4h-7ZM937.9,510.5h7v42.9h-7ZM954.7,521.3h7v44.5h-7Z"/>
<path d="M196.1,567.1C196.1,565.2 196.1,557.6 196.1,555.7L196.1,555.7C193.1,555 183.1,552.2 177.8,551.3C172.6,550.4 167.7,550.5 164.8,550.3C161.8,550.1 160.8,550.1 160,550.1L160,534.5C160.8,534.5 161.8,534.5 164.8,534.5C167.7,534.5 173.4,533.8 177.8,534.5C182.3,535.1 189.4,537.8 191.7,538.4L191.7,538.4C190.9,538.1 189.5,537.6 186.7,536.4C183.9,535.3 178.5,532.8 174.9,531.5C171.2,530.2 167.3,529 164.8,528.5C162.3,528 160.8,528.4 160,528.3L160,514.7C160.8,514.7 161.8,514.5 164.8,514.7C167.7,514.8 173.2,514.7 177.8,515.7C182.5,516.7 188.9,518.8 192.7,520.6C196.5,522.4 199.3,525.6 200.6,526.5L200.6,526.5C199.8,525.7 197.3,523.6 195.6,521.6C194,519.6 193.7,517 190.7,514.7C187.7,512.4 182.2,509.5 177.8,507.7C173.5,506 167.7,504.9 164.8,504.3C161.8,503.6 160.8,503.9 160,503.8L160,495.9C160.8,495.9 161.8,496 164.8,495.9C167.7,495.8 173.2,494.5 177.8,495.4C182.5,496.3 188.2,498.9 192.7,501.3C197.1,503.7 200.9,506.5 204.5,509.7C208.2,512.9 212.8,518.8 214.4,520.6L214.4,520.6C215.8,519.1 218.6,514.8 222.3,511.7C226.1,508.6 232.2,504.3 237.2,501.8C242.1,499.3 247.9,497.5 252,496.9C256.1,496.2 259.4,497.2 261.9,497.9C264.5,498.5 266.4,500.3 267.4,500.8L267.4,500.8C264.8,501.5 256.9,502.6 252,504.8C247.2,506.9 242.5,510.1 238.2,513.7C233.9,517.3 228.3,524.4 226.3,526.5L226.3,526.5C227.6,526 230.8,524.6 234.2,523.1C237.7,521.6 242.5,518.9 247.1,517.6C251.7,516.4 257.1,514.9 261.9,515.7C266.7,516.4 273.5,521 275.8,522.1L275.8,522.1C273.5,522.4 266.7,522.8 261.9,524.1C257.1,525.3 252,526.8 247.1,529.5C242.1,532.2 234.7,538.6 232.2,540.4L232.2,540.4C233.7,539.9 237,538.2 241.1,537.4C245.3,536.6 251.9,535.6 257,535.4C262.1,535.3 267.2,534.3 271.8,536.4C276.4,538.6 282.5,546.3 284.7,548.3L284.7,548.3C282.5,548.5 277.2,549 271.8,549.3C266.4,549.6 259.4,548.7 252,550.3C244.7,551.8 231.8,557.3 227.8,558.7L227.8,558.7C227.8,560.1 227.8,565.7 227.8,567.1Z"/>
</g>
<path fill="url(#gBack)" d="M522,593.5C522,530 560,484 633,484C706,484 745,530 745,593.5Z"/>
<rect x="165" y="596" width="950" height="110" fill="url(#gWater)"/><rect x="522" y="593" width="223" height="3.2" fill="#c464a2"/>
<path d="M191.5,657V680M216,658H204V681H216V669H205" fill="none" stroke="#fff" stroke-opacity="0.1" stroke-width="3"/>
</g>
<g fill="none" stroke="#3d7ad8" stroke-width="1.3">
<path d="M314.3,384C315,385 309.6,394.7 308.2,399.3C306.7,404 305.5,408.7 305.7,411.7C305.9,414.7 307.5,416.5 309.4,417.2C311.3,417.8 315.1,417.2 316.8,415.4C318.6,413.7 318.1,409.8 319.8,406.8C321.4,403.8 323.5,399.5 326.7,397.4C329.9,395.2 334.3,393.8 339.1,393.9C343.8,394 349.6,395.6 355.1,398.1C360.7,400.7 367.3,404.1 372.5,409.2C377.6,414.4 382.9,421.6 386.1,429C389.2,436.4 390.8,446.3 391.5,453.7C392.2,461.2 391.8,468.2 390.5,473.5C389.2,478.9 386.4,483.4 383.6,485.9C380.8,488.4 375.8,486.3 373.7,488.4C371.6,490.4 370.8,495.6 370.7,498.3C370.6,500.9 371.5,504.4 373.2,504.4C374.9,504.4 379.2,498.5 381.1,498.3C383,498.1 385.2,499.5 384.8,503.2C384.4,506.9 381.7,515.2 378.6,520.5C375.5,525.9 372.5,531 366.3,535.4C360.1,539.7 349.8,545.2 341.5,546.5C333.3,547.7 325.1,545.4 316.8,542.8C308.6,540.1 299.1,536.2 292.1,530.4C285.1,524.6 278.7,516.8 274.8,508.2C270.9,499.5 269.4,488 268.6,478.5C267.8,469 268.2,459.5 269.8,451.3C271.5,443 274.8,436.4 278.5,429C282.2,421.6 287.8,412.7 292.1,406.8C296.4,400.8 300.7,397 304.5,393.2C308.2,389.4 313.7,383 314.3,384Z"/>
<path d="M424.6,415.1C425.4,408.2 428.8,399.2 432.5,392.8C436.2,386.4 441.8,381.1 446.9,376.9C451.9,372.6 457,370.3 462.8,367.3C468.6,364.3 475.8,361.1 481.9,359C488,357 494.4,355.6 499.4,355C504.5,354.4 513,354 512.2,355.4C511.4,356.7 496,362.3 494.7,363.3C493.3,364.3 500.5,361.7 504.2,361.4C507.9,361.1 511.1,361.1 517,361.7C522.8,362.3 532.4,363.5 539.3,364.9C546.2,366.4 551.8,368 558.4,370.5C565,373 572.5,376.6 579.1,380.1C585.8,383.5 592.9,387.2 598.2,391.2C603.5,395.2 608.5,400.2 611,404C613.5,407.7 613.5,410.1 613.4,413.5C613.2,417 611.9,422.1 610.2,424.7C608.5,427.2 605.8,428.5 603,428.7C600.2,428.8 596.6,426.7 593.5,425.5C590.3,424.2 587.1,421.7 583.9,421.2C580.7,420.6 576.9,420.9 574.3,422.3C571.8,423.7 569.4,426.7 568.8,429.4C568.1,432.2 569.2,436.8 570.4,439C571.5,441.2 573.7,442.5 575.9,442.5C578.2,442.5 581.5,439.7 583.9,439C586.3,438.3 589.1,437.1 590.3,438.2C591.5,439.3 592.4,442.3 591.1,445.4C589.7,448.4 587.7,452.7 582.3,456.5C576.9,460.4 566.4,465.3 558.4,468.5C550.4,471.7 543.5,473.9 534.5,475.7C525.5,477.4 513.5,479.2 504.2,479.2C494.9,479.2 487,477.8 478.7,475.7C470.5,473.5 461.7,470.3 454.8,466.1C447.9,461.8 441.8,455.5 437.3,450.2C432.8,444.9 429.9,440.1 427.7,434.2C425.6,428.4 423.8,422 424.6,415.1Z"/>
<path d="M993.7,389.5C993.8,389.1 995.3,388.3 997.2,388.4C999.2,388.4 1002.4,388.7 1005.2,389.7C1008,390.7 1009.8,391 1013.9,394.5C1018.1,398 1024.8,404.3 1030,410.8C1035.2,417.3 1040.6,426 1045.3,433.5C1049.9,440.9 1055.4,453.3 1057.8,455.4C1060.2,457.5 1058.4,447.5 1059.5,446C1060.5,444.4 1062.8,443.9 1064.1,446C1065.3,448.1 1066.8,454.3 1067.2,458.5C1067.5,462.7 1068.1,466.2 1066.1,471C1064.2,475.9 1060.6,482.5 1055.7,487.7C1050.8,493 1043.9,498.3 1036.9,502.3C1030,506.4 1021.3,509.8 1013.9,511.7C1006.6,513.7 1000,514.4 993.1,513.8C986.1,513.3 979.2,511.6 972.2,508.6C965.2,505.7 957.2,501 951.3,496.1C945.4,491.2 940.2,485.6 936.7,479.4C933.2,473.1 930.8,465.5 930.4,458.5C930.1,451.5 931.8,444.2 934.6,437.6C937.4,431 941.9,424.4 947.1,418.8C952.4,413.3 958.8,408.1 965.9,404.2C973,400.3 983.4,396.7 989.7,395.4C996,394.1 1000.4,396.1 1003.7,396.5C1007,396.9 1009.6,398.3 1009.6,398C1009.5,397.6 1005.6,395.7 1003.4,394.5C1001.2,393.3 998,391.8 996.4,391C994.8,390.2 993.6,389.9 993.7,389.5Z"/>
<ellipse cx="1070" cy="518.5" rx="38" ry="34"/>
</g>
<g fill="none" stroke="#4d7fd4" stroke-width="1">
<rect x="268.5" y="354.5" width="840" height="198"/>
<path d="M688.5,324V354"/>
</g>
<g fill="#2c78d5" stroke="#fff" stroke-width="1.3">
<circle cx="268.5" cy="354.5" r="4.8"/><circle cx="688.5" cy="354.5" r="4.8"/><circle cx="1108.5" cy="354.5" r="4.8"/>
<circle cx="268.5" cy="453.5" r="4.8"/><circle cx="1108.5" cy="453.5" r="4.8"/>
<circle cx="268.5" cy="552.5" r="4.8"/><circle cx="688.5" cy="552.5" r="4.8"/><circle cx="1108.5" cy="552.5" r="4.8"/>
</g>
<circle cx="688.5" cy="324.2" r="4.6" fill="#f2f2f2" stroke="#2c78d5" stroke-width="1.5"/>
</svg>

<!-- right panel -->
<svg class="a" style="left:1232px;top:123px" width="264" height="693" viewBox="1232 123 264 693" font-size="11">
<defs>
<pattern id="pZig" width="4" height="4" patternUnits="userSpaceOnUse"><rect width="4" height="4" fill="#3a3b3d"/><path d="M0,3L2,1L4,3" fill="none" stroke="#323335" stroke-width="1"/></pattern>
<pattern id="pDark" width="3" height="3" patternUnits="userSpaceOnUse"><rect width="3" height="3" fill="#2a2a2a"/><rect width="1" height="1" fill="#222"/></pattern>
<pattern id="pRow" width="3" height="3" patternUnits="userSpaceOnUse"><rect width="3" height="3" fill="#373737"/><rect width="1" height="1" fill="#2f2f2f"/></pattern>
<pattern id="pSelL" width="2" height="2" patternUnits="userSpaceOnUse"><rect width="2" height="2" fill="#2e3850"/><rect width="1" height="1" fill="#3f4a66"/><rect x="1" y="1" width="1" height="1" fill="#35405a"/></pattern>
<pattern id="pChk" width="6" height="6" patternUnits="userSpaceOnUse"><rect width="6" height="6" fill="#999"/><rect width="3" height="3" fill="#ddd"/><rect x="3" y="3" width="3" height="3" fill="#ddd"/></pattern>
<linearGradient id="gOp" x1="0" x2="1"><stop offset="0" stop-color="#fff" stop-opacity="0.55"/><stop offset="1" stop-color="#1a1a1a" stop-opacity="0.8"/></linearGradient><pattern id="pChk2" x="1260.5" y="334.8" width="8" height="8" patternUnits="userSpaceOnUse"><rect width="8" height="8" fill="#8a8a8a"/><rect width="4" height="4" fill="#e8e8e8"/><rect x="4" y="4" width="4" height="4" fill="#e8e8e8"/></pattern>
<linearGradient id="gTriW" x1="1365" y1="304" x2="1322.5" y2="206" gradientUnits="userSpaceOnUse"><stop offset="0" stop-color="#fff"/><stop offset="1" stop-color="#000"/></linearGradient>
<linearGradient id="gTriH" x1="1428" y1="218" x2="1344" y2="255" gradientUnits="userSpaceOnUse"><stop offset="0" stop-color="#ec1f6a"/><stop offset="1" stop-color="#ec1f6a" stop-opacity="0"/></linearGradient>
<radialGradient id="gFill" cx="0.6" cy="0.5" r="0.7"><stop offset="0" stop-color="#c8769a"/><stop offset="1" stop-color="#9a3d68"/></radialGradient>
</defs>
<!-- panel bodies -->
<rect x="1232" y="125" width="263" height="690" fill="url(#pZig)"/>
<rect x="1232" y="356" width="263" height="3" fill="#2c2c2c"/>
<!-- color tab bar -->
<rect x="1232" y="125" width="263" height="19.5" fill="url(#pDark)"/>
<rect x="1232" y="125" width="19" height="19.5" fill="#262626"/>
<path d="M1240,130v9M1243,130v9" stroke="#4a4a4a" stroke-width="1"/>
<rect x="1251" y="125" width="32" height="20" fill="#3a3b3d"/>
<text x="1254" y="138.5" fill="#eee" stroke="#eee" stroke-width="0.35">Color</text>
<text x="1299" y="138.5" fill="#8a8a8a" stroke="#8a8a8a" stroke-width="0.35">Swt</text>
<text x="1340" y="138.5" fill="#8a8a8a" stroke="#8a8a8a" stroke-width="0.35">Stroke</text>
<text x="1384" y="138.5" fill="#8a8a8a" stroke="#8a8a8a" stroke-width="0.35">Brushes</text>
<text x="1443" y="138.5" fill="#8a8a8a" stroke="#8a8a8a" stroke-width="0.35">Apr</text>
<g fill="#4a4a4a"><rect x="1331.5" y="129" width="1" height="11"/><rect x="1379.5" y="129" width="1" height="11"/><rect x="1428" y="129" width="1" height="11"/></g>
<g fill="#ddd"><rect x="1480" y="130" width="10" height="1.2"/><rect x="1480" y="132.3" width="10" height="1.2"/><rect x="1480" y="134.6" width="10" height="1.2"/><rect x="1480" y="136.9" width="10" height="1.2"/><path d="M1489.5,138.5h4l-2,2.5z"/></g>
<!-- color swatches -->
<circle cx="1254.4" cy="166.1" r="12.8" fill="#4a4d50" stroke="#555" stroke-width="0.8"/>
<circle cx="1254.4" cy="166.1" r="10" fill="none" stroke="#f6f6f6" stroke-width="5"/>
<path d="M1260.5,159.5l2.2,-2.4M1247.5,173.5l-2.2,2.3" stroke="#f04545" stroke-width="1.3"/>
<circle cx="1264.8" cy="176.9" r="12.9" fill="#3a3b3d" stroke="#595959" stroke-width="0.9"/>
<circle cx="1264.8" cy="176.9" r="12" fill="url(#gFill)"/>
<circle cx="1245.4" cy="186.4" r="5" fill="#fff" stroke="#111" stroke-width="1.4"/><path d="M1242.4,189.4L1248.4,183.4" stroke="#f22" stroke-width="1.2"/>
<path d="M1270.5,154.5C1274,155 1277,158 1277.5,161.5" fill="none" stroke="#ccc" stroke-width="1.1"/><path d="M1269,154.5l3,-2.2v4.4zM1277.5,163l-2.2,-3h4.4z" fill="#ccc"/>
<path d="M1289,169L1298.5,159.5L1300.5,161.5L1291,171Z" fill="#9a9a9a"/><path d="M1298,157.5L1302,153.5L1305,156.5L1301,160.5Z" fill="#d8963a"/>
<circle cx="1314.4" cy="161.1" r="7.4" fill="#000" stroke="#555" stroke-width="0.9"/>
<!-- hue wheel -->
<g><path d="M1449.00,241.96A77.5,77.5 0 0 1 1448.86,247.10L1433.59,246.19A62.2,62.2 0 0 0 1433.70,242.07Z" fill="#ff0600"/><path d="M1448.92,246.02A77.5,77.5 0 0 1 1448.52,251.14L1433.31,249.43A62.2,62.2 0 0 0 1433.64,245.32Z" fill="#ff1300"/><path d="M1448.63,250.06A77.5,77.5 0 0 1 1447.96,255.16L1432.86,252.66A62.2,62.2 0 0 0 1433.40,248.57Z" fill="#ff1f00"/><path d="M1448.13,254.09A77.5,77.5 0 0 1 1447.19,259.14L1432.25,255.86A62.2,62.2 0 0 0 1433.00,251.80Z" fill="#ff2c00"/><path d="M1447.42,258.08A77.5,77.5 0 0 1 1446.22,263.08L1431.47,259.02A62.2,62.2 0 0 0 1432.43,255.01Z" fill="#ff3900"/><path d="M1446.50,262.04A77.5,77.5 0 0 1 1445.04,266.96L1430.52,262.13A62.2,62.2 0 0 0 1431.69,258.18Z" fill="#ff4600"/><path d="M1445.37,265.93A77.5,77.5 0 0 1 1443.66,270.78L1429.41,265.20A62.2,62.2 0 0 0 1430.79,261.31Z" fill="#ff5200"/><path d="M1444.04,269.77A77.5,77.5 0 0 1 1442.08,274.52L1428.14,268.20A62.2,62.2 0 0 0 1429.72,264.38Z" fill="#ff5f00"/><path d="M1442.52,273.53A77.5,77.5 0 0 1 1440.31,278.17L1426.72,271.12A62.2,62.2 0 0 0 1428.50,267.40Z" fill="#ff6c00"/><path d="M1440.80,277.20A77.5,77.5 0 0 1 1438.34,281.72L1425.15,273.98A62.2,62.2 0 0 0 1427.12,270.35Z" fill="#ff7900"/><path d="M1438.89,280.78A77.5,77.5 0 0 1 1436.20,285.16L1423.43,276.74A62.2,62.2 0 0 0 1425.58,273.22Z" fill="#ff8500"/><path d="M1436.79,284.25A77.5,77.5 0 0 1 1433.88,288.49L1421.56,279.41A62.2,62.2 0 0 0 1423.90,276.01Z" fill="#ff9200"/><path d="M1434.52,287.61A77.5,77.5 0 0 1 1431.39,291.69L1419.56,281.98A62.2,62.2 0 0 0 1422.07,278.71Z" fill="#ff9f00"/><path d="M1432.07,290.85A77.5,77.5 0 0 1 1428.73,294.76L1417.43,284.44A62.2,62.2 0 0 0 1420.11,281.31Z" fill="#ffac00"/><path d="M1429.45,293.95A77.5,77.5 0 0 1 1425.92,297.68L1415.17,286.79A62.2,62.2 0 0 0 1418.01,283.80Z" fill="#ffb800"/><path d="M1426.68,296.92A77.5,77.5 0 0 1 1422.95,300.45L1412.80,289.01A62.2,62.2 0 0 0 1415.79,286.17Z" fill="#ffc500"/><path d="M1423.76,299.73A77.5,77.5 0 0 1 1419.85,303.07L1410.31,291.11A62.2,62.2 0 0 0 1413.44,288.43Z" fill="#ffd200"/><path d="M1420.69,302.39A77.5,77.5 0 0 1 1416.61,305.52L1407.71,293.07A62.2,62.2 0 0 0 1410.98,290.56Z" fill="#ffdf00"/><path d="M1417.49,304.88A77.5,77.5 0 0 1 1413.25,307.79L1405.01,294.90A62.2,62.2 0 0 0 1408.41,292.56Z" fill="#ffeb00"/><path d="M1414.16,307.20A77.5,77.5 0 0 1 1409.78,309.89L1402.22,296.58A62.2,62.2 0 0 0 1405.74,294.43Z" fill="#fff800"/><path d="M1410.72,309.34A77.5,77.5 0 0 1 1406.20,311.80L1399.35,298.12A62.2,62.2 0 0 0 1402.98,296.15Z" fill="#f8ff00"/><path d="M1407.17,311.31A77.5,77.5 0 0 1 1402.53,313.52L1396.40,299.50A62.2,62.2 0 0 0 1400.12,297.72Z" fill="#ebff00"/><path d="M1403.52,313.08A77.5,77.5 0 0 1 1398.77,315.04L1393.38,300.72A62.2,62.2 0 0 0 1397.20,299.14Z" fill="#dfff00"/><path d="M1399.78,314.66A77.5,77.5 0 0 1 1394.93,316.37L1390.31,301.79A62.2,62.2 0 0 0 1394.20,300.41Z" fill="#d2ff00"/><path d="M1395.96,316.04A77.5,77.5 0 0 1 1391.04,317.50L1387.18,302.69A62.2,62.2 0 0 0 1391.13,301.52Z" fill="#c5ff00"/><path d="M1392.08,317.22A77.5,77.5 0 0 1 1387.08,318.42L1384.01,303.43A62.2,62.2 0 0 0 1388.02,302.47Z" fill="#b8ff00"/><path d="M1388.14,318.19A77.5,77.5 0 0 1 1383.09,319.13L1380.80,304.00A62.2,62.2 0 0 0 1384.86,303.25Z" fill="#acff00"/><path d="M1384.16,318.96A77.5,77.5 0 0 1 1379.06,319.63L1377.57,304.40A62.2,62.2 0 0 0 1381.66,303.86Z" fill="#9fff00"/><path d="M1380.14,319.52A77.5,77.5 0 0 1 1375.02,319.92L1374.32,304.64A62.2,62.2 0 0 0 1378.43,304.31Z" fill="#92ff00"/><path d="M1376.10,319.86A77.5,77.5 0 0 1 1370.96,320.00L1371.07,304.70A62.2,62.2 0 0 0 1375.19,304.59Z" fill="#85ff00"/><path d="M1372.04,320.00A77.5,77.5 0 0 1 1366.90,319.86L1367.81,304.59A62.2,62.2 0 0 0 1371.93,304.70Z" fill="#79ff00"/><path d="M1367.98,319.92A77.5,77.5 0 0 1 1362.86,319.52L1364.57,304.31A62.2,62.2 0 0 0 1368.68,304.64Z" fill="#6cff00"/><path d="M1363.94,319.63A77.5,77.5 0 0 1 1358.84,318.96L1361.34,303.86A62.2,62.2 0 0 0 1365.43,304.40Z" fill="#5fff00"/><path d="M1359.91,319.13A77.5,77.5 0 0 1 1354.86,318.19L1358.14,303.25A62.2,62.2 0 0 0 1362.20,304.00Z" fill="#52ff00"/><path d="M1355.92,318.42A77.5,77.5 0 0 1 1350.92,317.22L1354.98,302.47A62.2,62.2 0 0 0 1358.99,303.43Z" fill="#46ff00"/><path d="M1351.96,317.50A77.5,77.5 0 0 1 1347.04,316.04L1351.87,301.52A62.2,62.2 0 0 0 1355.82,302.69Z" fill="#39ff00"/><path d="M1348.07,316.37A77.5,77.5 0 0 1 1343.22,314.66L1348.80,300.41A62.2,62.2 0 0 0 1352.69,301.79Z" fill="#2cff00"/><path d="M1344.23,315.04A77.5,77.5 0 0 1 1339.48,313.08L1345.80,299.14A62.2,62.2 0 0 0 1349.62,300.72Z" fill="#1fff00"/><path d="M1340.47,313.52A77.5,77.5 0 0 1 1335.83,311.31L1342.88,297.72A62.2,62.2 0 0 0 1346.60,299.50Z" fill="#13ff00"/><path d="M1336.80,311.80A77.5,77.5 0 0 1 1332.28,309.34L1340.02,296.15A62.2,62.2 0 0 0 1343.65,298.12Z" fill="#06ff00"/><path d="M1333.22,309.89A77.5,77.5 0 0 1 1328.84,307.20L1337.26,294.43A62.2,62.2 0 0 0 1340.78,296.58Z" fill="#00ff06"/><path d="M1329.75,307.79A77.5,77.5 0 0 1 1325.51,304.88L1334.59,292.56A62.2,62.2 0 0 0 1337.99,294.90Z" fill="#00ff13"/><path d="M1326.39,305.52A77.5,77.5 0 0 1 1322.31,302.39L1332.02,290.56A62.2,62.2 0 0 0 1335.29,293.07Z" fill="#00ff1f"/><path d="M1323.15,303.07A77.5,77.5 0 0 1 1319.24,299.73L1329.56,288.43A62.2,62.2 0 0 0 1332.69,291.11Z" fill="#00ff2c"/><path d="M1320.05,300.45A77.5,77.5 0 0 1 1316.32,296.92L1327.21,286.17A62.2,62.2 0 0 0 1330.20,289.01Z" fill="#00ff39"/><path d="M1317.08,297.68A77.5,77.5 0 0 1 1313.55,293.95L1324.99,283.80A62.2,62.2 0 0 0 1327.83,286.79Z" fill="#00ff46"/><path d="M1314.27,294.76A77.5,77.5 0 0 1 1310.93,290.85L1322.89,281.31A62.2,62.2 0 0 0 1325.57,284.44Z" fill="#00ff52"/><path d="M1311.61,291.69A77.5,77.5 0 0 1 1308.48,287.61L1320.93,278.71A62.2,62.2 0 0 0 1323.44,281.98Z" fill="#00ff5f"/><path d="M1309.12,288.49A77.5,77.5 0 0 1 1306.21,284.25L1319.10,276.01A62.2,62.2 0 0 0 1321.44,279.41Z" fill="#00ff6c"/><path d="M1306.80,285.16A77.5,77.5 0 0 1 1304.11,280.78L1317.42,273.22A62.2,62.2 0 0 0 1319.57,276.74Z" fill="#00ff79"/><path d="M1304.66,281.72A77.5,77.5 0 0 1 1302.20,277.20L1315.88,270.35A62.2,62.2 0 0 0 1317.85,273.98Z" fill="#00ff85"/><path d="M1302.69,278.17A77.5,77.5 0 0 1 1300.48,273.53L1314.50,267.40A62.2,62.2 0 0 0 1316.28,271.12Z" fill="#00ff92"/><path d="M1300.92,274.52A77.5,77.5 0 0 1 1298.96,269.77L1313.28,264.38A62.2,62.2 0 0 0 1314.86,268.20Z" fill="#00ff9f"/><path d="M1299.34,270.78A77.5,77.5 0 0 1 1297.63,265.93L1312.21,261.31A62.2,62.2 0 0 0 1313.59,265.20Z" fill="#00ffac"/><path d="M1297.96,266.96A77.5,77.5 0 0 1 1296.50,262.04L1311.31,258.18A62.2,62.2 0 0 0 1312.48,262.13Z" fill="#00ffb8"/><path d="M1296.78,263.08A77.5,77.5 0 0 1 1295.58,258.08L1310.57,255.01A62.2,62.2 0 0 0 1311.53,259.02Z" fill="#00ffc5"/><path d="M1295.81,259.14A77.5,77.5 0 0 1 1294.87,254.09L1310.00,251.80A62.2,62.2 0 0 0 1310.75,255.86Z" fill="#00ffd2"/><path d="M1295.04,255.16A77.5,77.5 0 0 1 1294.37,250.06L1309.60,248.57A62.2,62.2 0 0 0 1310.14,252.66Z" fill="#00ffdf"/><path d="M1294.48,251.14A77.5,77.5 0 0 1 1294.08,246.02L1309.36,245.32A62.2,62.2 0 0 0 1309.69,249.43Z" fill="#00ffeb"/><path d="M1294.14,247.10A77.5,77.5 0 0 1 1294.00,241.96L1309.30,242.07A62.2,62.2 0 0 0 1309.41,246.19Z" fill="#00fff8"/><path d="M1294.00,243.04A77.5,77.5 0 0 1 1294.14,237.90L1309.41,238.81A62.2,62.2 0 0 0 1309.30,242.93Z" fill="#00f8ff"/><path d="M1294.08,238.98A77.5,77.5 0 0 1 1294.48,233.86L1309.69,235.57A62.2,62.2 0 0 0 1309.36,239.68Z" fill="#00ebff"/><path d="M1294.37,234.94A77.5,77.5 0 0 1 1295.04,229.84L1310.14,232.34A62.2,62.2 0 0 0 1309.60,236.43Z" fill="#00dfff"/><path d="M1294.87,230.91A77.5,77.5 0 0 1 1295.81,225.86L1310.75,229.14A62.2,62.2 0 0 0 1310.00,233.20Z" fill="#00d2ff"/><path d="M1295.58,226.92A77.5,77.5 0 0 1 1296.78,221.92L1311.53,225.98A62.2,62.2 0 0 0 1310.57,229.99Z" fill="#00c5ff"/><path d="M1296.50,222.96A77.5,77.5 0 0 1 1297.96,218.04L1312.48,222.87A62.2,62.2 0 0 0 1311.31,226.82Z" fill="#00b8ff"/><path d="M1297.63,219.07A77.5,77.5 0 0 1 1299.34,214.22L1313.59,219.80A62.2,62.2 0 0 0 1312.21,223.69Z" fill="#00acff"/><path d="M1298.96,215.23A77.5,77.5 0 0 1 1300.92,210.48L1314.86,216.80A62.2,62.2 0 0 0 1313.28,220.62Z" fill="#009fff"/><path d="M1300.48,211.47A77.5,77.5 0 0 1 1302.69,206.83L1316.28,213.88A62.2,62.2 0 0 0 1314.50,217.60Z" fill="#0092ff"/><path d="M1302.20,207.80A77.5,77.5 0 0 1 1304.66,203.28L1317.85,211.02A62.2,62.2 0 0 0 1315.88,214.65Z" fill="#0085ff"/><path d="M1304.11,204.22A77.5,77.5 0 0 1 1306.80,199.84L1319.57,208.26A62.2,62.2 0 0 0 1317.42,211.78Z" fill="#0079ff"/><path d="M1306.21,200.75A77.5,77.5 0 0 1 1309.12,196.51L1321.44,205.59A62.2,62.2 0 0 0 1319.10,208.99Z" fill="#006cff"/><path d="M1308.48,197.39A77.5,77.5 0 0 1 1311.61,193.31L1323.44,203.02A62.2,62.2 0 0 0 1320.93,206.29Z" fill="#005fff"/><path d="M1310.93,194.15A77.5,77.5 0 0 1 1314.27,190.24L1325.57,200.56A62.2,62.2 0 0 0 1322.89,203.69Z" fill="#0052ff"/><path d="M1313.55,191.05A77.5,77.5 0 0 1 1317.08,187.32L1327.83,198.21A62.2,62.2 0 0 0 1324.99,201.20Z" fill="#0046ff"/><path d="M1316.32,188.08A77.5,77.5 0 0 1 1320.05,184.55L1330.20,195.99A62.2,62.2 0 0 0 1327.21,198.83Z" fill="#0039ff"/><path d="M1319.24,185.27A77.5,77.5 0 0 1 1323.15,181.93L1332.69,193.89A62.2,62.2 0 0 0 1329.56,196.57Z" fill="#002cff"/><path d="M1322.31,182.61A77.5,77.5 0 0 1 1326.39,179.48L1335.29,191.93A62.2,62.2 0 0 0 1332.02,194.44Z" fill="#001fff"/><path d="M1325.51,180.12A77.5,77.5 0 0 1 1329.75,177.21L1337.99,190.10A62.2,62.2 0 0 0 1334.59,192.44Z" fill="#0013ff"/><path d="M1328.84,177.80A77.5,77.5 0 0 1 1333.22,175.11L1340.78,188.42A62.2,62.2 0 0 0 1337.26,190.57Z" fill="#0006ff"/><path d="M1332.28,175.66A77.5,77.5 0 0 1 1336.80,173.20L1343.65,186.88A62.2,62.2 0 0 0 1340.02,188.85Z" fill="#0600ff"/><path d="M1335.83,173.69A77.5,77.5 0 0 1 1340.47,171.48L1346.60,185.50A62.2,62.2 0 0 0 1342.88,187.28Z" fill="#1300ff"/><path d="M1339.48,171.92A77.5,77.5 0 0 1 1344.23,169.96L1349.62,184.28A62.2,62.2 0 0 0 1345.80,185.86Z" fill="#1f00ff"/><path d="M1343.22,170.34A77.5,77.5 0 0 1 1348.07,168.63L1352.69,183.21A62.2,62.2 0 0 0 1348.80,184.59Z" fill="#2c00ff"/><path d="M1347.04,168.96A77.5,77.5 0 0 1 1351.96,167.50L1355.82,182.31A62.2,62.2 0 0 0 1351.87,183.48Z" fill="#3900ff"/><path d="M1350.92,167.78A77.5,77.5 0 0 1 1355.92,166.58L1358.99,181.57A62.2,62.2 0 0 0 1354.98,182.53Z" fill="#4600ff"/><path d="M1354.86,166.81A77.5,77.5 0 0 1 1359.91,165.87L1362.20,181.00A62.2,62.2 0 0 0 1358.14,181.75Z" fill="#5200ff"/><path d="M1358.84,166.04A77.5,77.5 0 0 1 1363.94,165.37L1365.43,180.60A62.2,62.2 0 0 0 1361.34,181.14Z" fill="#5f00ff"/><path d="M1362.86,165.48A77.5,77.5 0 0 1 1367.98,165.08L1368.68,180.36A62.2,62.2 0 0 0 1364.57,180.69Z" fill="#6c00ff"/><path d="M1366.90,165.14A77.5,77.5 0 0 1 1372.04,165.00L1371.93,180.30A62.2,62.2 0 0 0 1367.81,180.41Z" fill="#7900ff"/><path d="M1370.96,165.00A77.5,77.5 0 0 1 1376.10,165.14L1375.19,180.41A62.2,62.2 0 0 0 1371.07,180.30Z" fill="#8500ff"/><path d="M1375.02,165.08A77.5,77.5 0 0 1 1380.14,165.48L1378.43,180.69A62.2,62.2 0 0 0 1374.32,180.36Z" fill="#9200ff"/><path d="M1379.06,165.37A77.5,77.5 0 0 1 1384.16,166.04L1381.66,181.14A62.2,62.2 0 0 0 1377.57,180.60Z" fill="#9f00ff"/><path d="M1383.09,165.87A77.5,77.5 0 0 1 1388.14,166.81L1384.86,181.75A62.2,62.2 0 0 0 1380.80,181.00Z" fill="#ac00ff"/><path d="M1387.08,166.58A77.5,77.5 0 0 1 1392.08,167.78L1388.02,182.53A62.2,62.2 0 0 0 1384.01,181.57Z" fill="#b800ff"/><path d="M1391.04,167.50A77.5,77.5 0 0 1 1395.96,168.96L1391.13,183.48A62.2,62.2 0 0 0 1387.18,182.31Z" fill="#c500ff"/><path d="M1394.93,168.63A77.5,77.5 0 0 1 1399.78,170.34L1394.20,184.59A62.2,62.2 0 0 0 1390.31,183.21Z" fill="#d200ff"/><path d="M1398.77,169.96A77.5,77.5 0 0 1 1403.52,171.92L1397.20,185.86A62.2,62.2 0 0 0 1393.38,184.28Z" fill="#df00ff"/><path d="M1402.53,171.48A77.5,77.5 0 0 1 1407.17,173.69L1400.12,187.28A62.2,62.2 0 0 0 1396.40,185.50Z" fill="#eb00ff"/><path d="M1406.20,173.20A77.5,77.5 0 0 1 1410.72,175.66L1402.98,188.85A62.2,62.2 0 0 0 1399.35,186.88Z" fill="#f800ff"/><path d="M1409.78,175.11A77.5,77.5 0 0 1 1414.16,177.80L1405.74,190.57A62.2,62.2 0 0 0 1402.22,188.42Z" fill="#ff00f8"/><path d="M1413.25,177.21A77.5,77.5 0 0 1 1417.49,180.12L1408.41,192.44A62.2,62.2 0 0 0 1405.01,190.10Z" fill="#ff00eb"/><path d="M1416.61,179.48A77.5,77.5 0 0 1 1420.69,182.61L1410.98,194.44A62.2,62.2 0 0 0 1407.71,191.93Z" fill="#ff00df"/><path d="M1419.85,181.93A77.5,77.5 0 0 1 1423.76,185.27L1413.44,196.57A62.2,62.2 0 0 0 1410.31,193.89Z" fill="#ff00d2"/><path d="M1422.95,184.55A77.5,77.5 0 0 1 1426.68,188.08L1415.79,198.83A62.2,62.2 0 0 0 1412.80,195.99Z" fill="#ff00c5"/><path d="M1425.92,187.32A77.5,77.5 0 0 1 1429.45,191.05L1418.01,201.20A62.2,62.2 0 0 0 1415.17,198.21Z" fill="#ff00b8"/><path d="M1428.73,190.24A77.5,77.5 0 0 1 1432.07,194.15L1420.11,203.69A62.2,62.2 0 0 0 1417.43,200.56Z" fill="#ff00ac"/><path d="M1431.39,193.31A77.5,77.5 0 0 1 1434.52,197.39L1422.07,206.29A62.2,62.2 0 0 0 1419.56,203.02Z" fill="#ff009f"/><path d="M1433.88,196.51A77.5,77.5 0 0 1 1436.79,200.75L1423.90,208.99A62.2,62.2 0 0 0 1421.56,205.59Z" fill="#ff0092"/><path d="M1436.20,199.84A77.5,77.5 0 0 1 1438.89,204.22L1425.58,211.78A62.2,62.2 0 0 0 1423.43,208.26Z" fill="#ff0085"/><path d="M1438.34,203.28A77.5,77.5 0 0 1 1440.80,207.80L1427.12,214.65A62.2,62.2 0 0 0 1425.15,211.02Z" fill="#ff0079"/><path d="M1440.31,206.83A77.5,77.5 0 0 1 1442.52,211.47L1428.50,217.60A62.2,62.2 0 0 0 1426.72,213.88Z" fill="#ff006c"/><path d="M1442.08,210.48A77.5,77.5 0 0 1 1444.04,215.23L1429.72,220.62A62.2,62.2 0 0 0 1428.14,216.80Z" fill="#ff005f"/><path d="M1443.66,214.22A77.5,77.5 0 0 1 1445.37,219.07L1430.79,223.69A62.2,62.2 0 0 0 1429.41,219.80Z" fill="#ff0052"/><path d="M1445.04,218.04A77.5,77.5 0 0 1 1446.50,222.96L1431.69,226.82A62.2,62.2 0 0 0 1430.52,222.87Z" fill="#ff0046"/><path d="M1446.22,221.92A77.5,77.5 0 0 1 1447.42,226.92L1432.43,229.99A62.2,62.2 0 0 0 1431.47,225.98Z" fill="#ff0039"/><path d="M1447.19,225.86A77.5,77.5 0 0 1 1448.13,230.91L1433.00,233.20A62.2,62.2 0 0 0 1432.25,229.14Z" fill="#ff002c"/><path d="M1447.96,229.84A77.5,77.5 0 0 1 1448.63,234.94L1433.40,236.43A62.2,62.2 0 0 0 1432.86,232.34Z" fill="#ff001f"/><path d="M1448.52,233.86A77.5,77.5 0 0 1 1448.92,238.98L1433.64,239.68A62.2,62.2 0 0 0 1433.31,235.57Z" fill="#ff0013"/><path d="M1448.86,237.90A77.5,77.5 0 0 1 1449.00,243.04L1433.70,242.93A62.2,62.2 0 0 0 1433.59,238.81Z" fill="#ff0006"/></g>
<path d="M1428.2,218.2L1322.6,206.6L1365.4,304.9Z" fill="url(#gTriW)"/>
<path d="M1428.2,218.2L1322.6,206.6L1365.4,304.9Z" fill="url(#gTriH)"/>
<circle cx="1435.4" cy="214.6" r="4.5" fill="none" stroke="#fff" stroke-width="1.5"/>
<circle cx="1362.4" cy="223.3" r="4" fill="#75203f" stroke="#fff" stroke-width="1.3"/>
<text x="1240" y="283" fill="#ccc">H: 337</text>
<text x="1241" y="296" fill="#ccc">S: 54</text>
<text x="1242" y="309" fill="#ccc">L: 30</text>
<text x="1240" y="325.5" fill="#ccc">Opacity</text>
<circle cx="1247.4" cy="338.6" r="6.3" fill="#75203f"/>
<rect x="1260.5" y="334.8" width="159" height="8" rx="4" fill="url(#pChk2)"/>
<rect x="1260.5" y="334.8" width="159" height="8" rx="4" fill="url(#gOp)"/>
<circle cx="1414.8" cy="338.6" r="5" fill="#222" stroke="#fff" stroke-width="1.6"/>
<rect x="1430" y="328.7" width="60.4" height="20" rx="3" fill="#2a2a2a"/>
<rect x="1473.5" y="328.7" width="1" height="20" fill="#3e3e3e"/>
<text x="1433.5" y="342.5" fill="#ddd">100 %</text>
<path d="M1478.5,336.5h6l-3,5z" fill="#ccc"/>
<!-- layers tab bar -->
<rect x="1232" y="359" width="263" height="19.6" fill="url(#pDark)"/>
<rect x="1232" y="359" width="19" height="19.6" fill="#262626"/>
<path d="M1240,364v9M1243,364v9" stroke="#4a4a4a" stroke-width="1"/>
<rect x="1251" y="359" width="38" height="20" fill="#3a3b3d"/>
<text x="1254" y="372" fill="#eee" stroke="#eee" stroke-width="0.35">Layers</text>
<text x="1294" y="372" fill="#8a8a8a" stroke="#8a8a8a" stroke-width="0.35">Effects</text>
<text x="1336" y="372" fill="#8a8a8a" stroke="#8a8a8a" stroke-width="0.35">Styles</text>
<text x="1374.4" y="372" fill="#8a8a8a" stroke="#8a8a8a" stroke-width="0.35">Text Styles</text>
<text x="1435.3" y="372" fill="#8a8a8a" stroke="#8a8a8a" stroke-width="0.35">Stock</text>
<g fill="#4a4a4a"><rect x="1331.5" y="363" width="1" height="11"/><rect x="1370" y="363" width="1" height="11"/><rect x="1431" y="363" width="1" height="11"/></g>
<g fill="#ddd"><rect x="1480" y="364" width="10" height="1.2"/><rect x="1480" y="366.3" width="10" height="1.2"/><rect x="1480" y="368.6" width="10" height="1.2"/><rect x="1480" y="370.9" width="10" height="1.2"/><path d="M1489.5,372.5h4l-2,2.5z"/></g>
<!-- layers opacity row -->
<text x="1237.3" y="397.5" fill="#ccc">Opacity:</text>
<rect x="1292.6" y="384.4" width="48" height="20" rx="3" fill="#2a2a2a"/>
<text x="1295" y="398.5" fill="#ddd">100 %</text>
<path d="M1330,391.5h5.5l-2.75,4z" fill="#ccc"/>
<rect x="1343.4" y="384.4" width="108" height="20" rx="3" fill="#2a2a2a"/>
<text x="1347" y="398.5" fill="#ddd">Normal</text>
<path d="M1440.5,390.5l2,-2.5l2,2.5zM1440.5,397.5l2,2.5l2,-2.5z" fill="#ccc"/>
<g transform="translate(1461.9,394)"><circle r="4.2" fill="none" stroke="#bbb" stroke-width="2.6" stroke-dasharray="1.8 1.1"/><circle r="3.2" fill="none" stroke="#bbb" stroke-width="1.6"/></g>
<rect x="1477.5" y="393" width="8.5" height="7" rx="1" fill="#bbb"/><path d="M1479.3,393v-2.5a2.45,2.45 0 0 1 4.9,0V393" fill="none" stroke="#bbb" stroke-width="1.4"/>
<!-- layer rows -->
<rect x="1232" y="408.5" width="263" height="261" fill="#2f2f2f"/>
<rect x="1232" y="408.6" width="239" height="29.5" fill="url(#pSelL)"/>
<rect x="1329" y="436.8" width="142" height="1.3" fill="#3a7ad0"/>
<rect x="1232" y="438.5" width="249" height="32.5" fill="url(#pRow)"/>
<rect x="1232" y="472.5" width="249" height="32.5" fill="url(#pRow)"/>
<rect x="1232" y="506.3" width="249" height="31.7" fill="#3f6494"/>
<rect x="1232" y="539.5" width="249" height="31.5" fill="#3f6494"/>
<rect x="1232" y="572.6" width="249" height="31.4" fill="#3f6494"/>
<rect x="1232" y="605.6" width="249" height="31.4" fill="#3f6494"/>
<rect x="1232" y="638.5" width="249" height="30.5" fill="url(#pRow)"/>
<rect x="1485" y="494" width="8" height="90" rx="4" fill="#555"/>
<!-- front land row -->
<circle cx="1272.9" cy="423.5" r="7" fill="#2b2b2b" stroke="#c8c8c8" stroke-width="1.2"/><path d="M1269,421h7.8l-3.9,5.5z" fill="#eee"/>
<rect x="1283.2" y="408.6" width="29.5" height="29" fill="#2b2b2b" stroke="#111" stroke-width="1"/>
<path d="M1287,426C1290,423 1293,422 1297,423C1300,425 1303,426 1307,424" fill="none" stroke="#5a2040" stroke-width="1.4"/>
<circle cx="1290" cy="424" r="1.8" fill="#d0508a"/><circle cx="1294" cy="422" r="1.8" fill="#d0508a"/><circle cx="1306" cy="424.5" r="1.8" fill="#d0508a"/>
<text x="1318.4" y="426.7" fill="#fff" font-weight="bold" letter-spacing="-0.25">Front land</text>
<text x="1373.5" y="426.7" fill="#9a9a9a" letter-spacing="-0.2">(Layer)</text>
<!-- group rows -->
<circle cx="1282.8" cy="456" r="6.5" fill="#2c2c2c"/><path d="M1280.8,452.5v7l5,-3.5z" fill="#c8c8c8"/>
<rect x="1293.3" y="441.2" width="29.5" height="29.4" fill="#2b2b2b" stroke="#111" stroke-width="1"/>
<path d="M1296,457C1301,455 1306,453 1311,455C1314,456 1317,457 1320,456" fill="none" stroke="#4a1e34" stroke-width="1"/>
<text x="1328.5" y="460" fill="#bbb">(Group)</text>
<circle cx="1282.8" cy="489" r="6.5" fill="#2c2c2c"/><path d="M1280.8,485.5v7l5,-3.5z" fill="#c8c8c8"/>
<rect x="1293.3" y="474.2" width="29.5" height="29.4" fill="#2b2b2b" stroke="#111" stroke-width="1"/>
<text x="1328.5" y="493" fill="#bbb">(Group)</text>
<!-- curve rows -->
<g stroke="#111" stroke-width="1" fill="#2b2b2b">
<rect x="1293.3" y="507" width="29.5" height="30"/><rect x="1293.3" y="540" width="29.5" height="30"/><rect x="1293.3" y="573" width="29.5" height="30"/><rect x="1293.3" y="606" width="29.5" height="30"/>
</g>
<g fill="#c0537f">
<ellipse cx="1308" cy="521.5" rx="13" ry="13"/>
<path d="M1296,556C1296,548 1302,543 1310,542C1314,543 1320,548 1321,553C1320,560 1315,567 1307,567C1300,567 1296,562 1296,556Z"/>
<path d="M1294,588C1296,581 1304,578 1312,579C1318,580 1321,584 1321,586L1317,588L1318,592C1314,596 1306,597 1300,595C1296,593 1294,590 1294,588Z"/>
<path d="M1302,610L1305,613C1309,609 1316,612 1319,618C1320,625 1317,633 1309,634C1301,634 1298,628 1297,622C1297,616 1299,612 1302,610Z"/>
</g>
<g fill="#c0c8d6"><text x="1328.5" y="526">(Curve)</text><text x="1328.5" y="559">(Curve)</text><text x="1328.5" y="592">(Curve)</text><text x="1328.5" y="625">(Curve)</text></g>
<!-- back land -->
<circle cx="1273.2" cy="653.7" r="6.5" fill="#2c2c2c"/><path d="M1271.2,650.2v7l5,-3.5z" fill="#c8c8c8"/>
<rect x="1283.6" y="638.8" width="29" height="30" fill="#2b2b2b" stroke="#111" stroke-width="1"/>
<path d="M1285,664L1292,659L1298,660L1304,656L1306,652L1310,656V664Z" fill="#b84a7a"/>
<text x="1318.5" y="657.5" fill="#fff" font-weight="bold" letter-spacing="-0.25">Back land</text>
<text x="1371.5" y="657.5" fill="#9a9a9a" letter-spacing="-0.2">(Layer)</text>
<!-- checkboxes -->
<g fill="#3a3a3a" stroke="#262626" stroke-width="1">
<rect x="1450.5" y="417" width="12" height="12" rx="2.5"/><rect x="1450.5" y="449.5" width="12" height="12" rx="2.5"/><rect x="1450.5" y="482.5" width="12" height="12" rx="2.5"/>
<rect x="1450.5" y="514.5" width="12" height="12" rx="2.5"/><rect x="1450.5" y="547.5" width="12" height="12" rx="2.5"/><rect x="1450.5" y="580.5" width="12" height="12" rx="2.5"/><rect x="1450.5" y="613.5" width="12" height="12" rx="2.5"/>
<rect x="1450.5" y="647.5" width="12" height="12" rx="2.5"/>
</g>
<g fill="none" stroke="#eee" stroke-width="1.5" stroke-linecap="round" stroke-linejoin="round">
<path d="M1453.5,423.5l2,2.5l4,-6"/><path d="M1453.5,456l2,2.5l4,-6"/>
<path d="M1453.5,521l2,2.5l4,-6"/><path d="M1453.5,554l2,2.5l4,-6"/><path d="M1453.5,587l2,2.5l4,-6"/><path d="M1453.5,620l2,2.5l4,-6"/>
<path d="M1453.5,654l2,2.5l4,-6"/>
</g>
<!-- layers bottom bar -->
<rect x="1232" y="669" width="263" height="23" fill="url(#pZig)"/>
<rect x="1232" y="669" width="263" height="1" fill="#2a2a2a"/>
<rect x="1236.8" y="670" width="20.2" height="19.4" fill="#303030"/>
<path d="M1240,676.5l7,-3.5l7,3.5l-7,3.5z" fill="#c8c8c8"/><path d="M1240,679.5l7,3.5l7,-3.5M1240,682.5l7,3.5l7,-3.5" fill="none" stroke="#c8c8c8" stroke-width="1.2"/>
<rect x="1315" y="673.8" width="14" height="12" fill="#aaa"/><circle cx="1322" cy="679.8" r="3.8" fill="#222"/>
<circle cx="1345.1" cy="679.7" r="5.8" fill="#aaa"/><path d="M1345.1,673.9A5.8,5.8 0 0 1 1345.1,685.5Z" fill="#333"/><path d="M1345.1,673.9A5.8,5.8 0 0 0 1345.1,685.5" fill="none" stroke="#aaa" stroke-width="1"/>
<text x="1359.5" y="685" font-family="Liberation Serif" font-style="italic" font-size="13" fill="#aaa">fx</text>
<path d="M1432.5,673.5h6l3.5,3.5v9h-9.5z" fill="none" stroke="#bbb" stroke-width="1.1"/>
<pattern id="pChk3" x="1455" y="674" width="5" height="5" patternUnits="userSpaceOnUse"><rect width="5" height="5" fill="#c8c8c8"/><rect width="2.5" height="2.5" fill="#2a2a2a"/><rect x="2.5" y="2.5" width="2.5" height="2.5" fill="#2a2a2a"/></pattern><rect x="1455" y="674" width="10" height="11" fill="url(#pChk3)" stroke="#bbb" stroke-width="0.8"/>
<path d="M1477.5,675.5h10M1479,675.5v10.5h7v-10.5M1481,673.8h3M1481.5,677.5v6.5M1483.5,677.5v6.5" fill="none" stroke="#bbb" stroke-width="1.1"/>
<!-- transform tab bar -->
<rect x="1232" y="692.8" width="263" height="22" fill="url(#pDark)"/>
<rect x="1232" y="692.8" width="19" height="22" fill="#262626"/>
<path d="M1240,699v9M1243,699v9" stroke="#4a4a4a" stroke-width="1"/>
<rect x="1251" y="692.8" width="55.3" height="22.2" fill="#3a3b3d"/>
<text x="1254.5" y="708" fill="#eee" stroke="#eee" stroke-width="0.35">Transform</text>
<text x="1311" y="708" fill="#8a8a8a" stroke="#8a8a8a" stroke-width="0.35">History</text>
<rect x="1350" y="698" width="1" height="11" fill="#4a4a4a"/>
<text x="1354.3" y="708" fill="#8a8a8a" stroke="#8a8a8a" stroke-width="0.35">Navigator</text>
<!-- transform body -->
<rect x="1251.8" y="738.4" width="35.2" height="34.3" fill="#6a6a6a"/>
<g fill="#bdbdbd"><rect x="1266" y="736.2" width="5" height="5"/><rect x="1282" y="736.2" width="5" height="5"/><rect x="1250" y="752.5" width="5" height="5"/><rect x="1266" y="752.5" width="5" height="5"/><rect x="1282" y="752.5" width="5" height="5"/><rect x="1250" y="768.5" width="5" height="5"/><rect x="1266" y="768.5" width="5" height="5"/><rect x="1282" y="768.5" width="5" height="5"/></g>
<rect x="1246.5" y="733" width="10" height="10" fill="#f2f2f2"/>
<g fill="#2a2a2a"><rect x="1319.3" y="726" width="59" height="17.3" rx="3"/><rect x="1319.3" y="748" width="59" height="17.8" rx="3"/><rect x="1403.7" y="726" width="59" height="17.3" rx="3"/><rect x="1403.7" y="748" width="59" height="17.8" rx="3"/><rect x="1319.3" y="779.6" width="59" height="17.8" rx="3"/><rect x="1403.7" y="779.6" width="59" height="17.8" rx="3"/></g>
<g fill="#ccc"><text x="1306" y="739.5">X:</text><text x="1306" y="761.5">Y:</text><text x="1388" y="739.5">W:</text><text x="1389" y="761.5">H:</text><text x="1306" y="793">R:</text><text x="1389" y="793">S:</text></g>
<g fill="#e6e6e6"><text x="1320.5" y="739.5">1.196 in</text><text x="1320.5" y="761.5">4.42 in</text><text x="1404.5" y="739.5">9.717 in</text><text x="1404.5" y="761.5">2.292 in</text><text x="1320.5" y="793">0 °</text><text x="1404.5" y="793">0 °</text></g>
<path d="M1369,786h6l-3,4.5zM1453.5,786h6l-3,4.5z" fill="#ccc"/>
<path d="M1475.7,740v3M1475.7,749v3" stroke="#999" stroke-width="1.2"/><rect x="1474" y="742" width="3.4" height="8" rx="1.7" fill="none" stroke="#999" stroke-width="1"/>
</svg>

<!-- status -->
<div class="txt" style="left:76px;top:819px;color:#bbb;font-size:11px">4 objects selected. <b style="color:#fff">Drag</b> to move selection. <b style="color:#fff">Click</b> another object to select it. <b style="color:#fff">Click</b> on an empty area to deselect selection. <svg width="10" height="10" viewBox="0 0 10 10" style="vertical-align:-1px"><path d="M5,0.8L9.3,5.2H7V9.2H3V5.2H0.7Z" fill="none" stroke="#fff" stroke-width="1.5" stroke-linejoin="round"/></svg> to constrain. <svg width="10" height="10" viewBox="0 0 10 10" style="vertical-align:-1px"><path d="M3.3,3.3H6.7V6.7H3.3ZM3.3,3.3V2A1.3,1.3 0 1 0 2,3.3H3.3M6.7,3.3V2A1.3,1.3 0 1 1 8,3.3H6.7M6.7,6.7V8A1.3,1.3 0 1 0 8,6.7H6.7M3.3,6.7V8A1.3,1.3 0 1 1 2,6.7H3.3" fill="none" stroke="#fff" stroke-width="1.3"/></svg> to clone selected objects. <svg width="10" height="10" viewBox="0 0 10 10" style="vertical-align:-1px"><path d="M0.5,2H3.5L7,8.5H9.5M6,2H9.5" fill="none" stroke="#fff" stroke-width="1.5"/></svg> to ignore snapping.</div>
</body></html>
